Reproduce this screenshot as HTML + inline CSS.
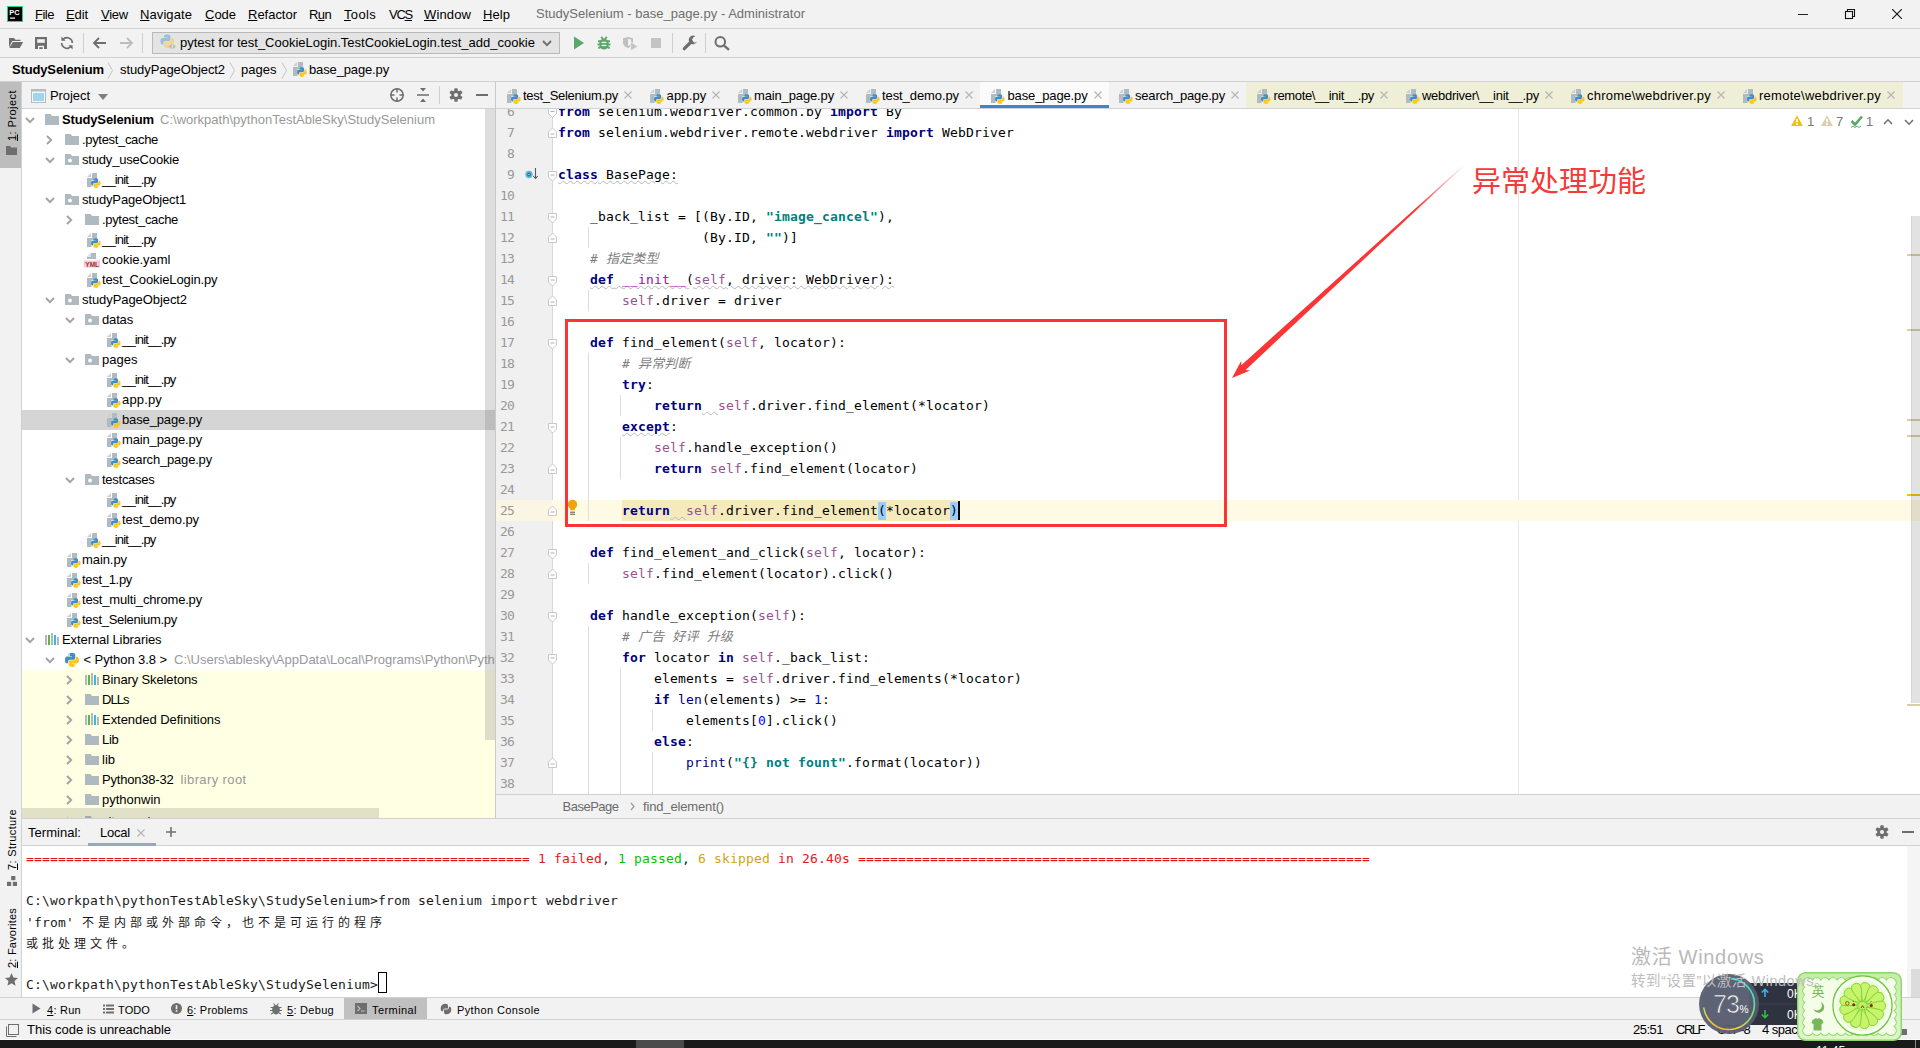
<!DOCTYPE html>
<html lang="zh"><head><meta charset="utf-8"><title>StudySelenium - base_page.py</title>
<style>
html,body{margin:0;padding:0}
body{width:1920px;height:1048px;overflow:hidden;position:relative;background:#f2f2f2;font-family:"Liberation Sans","Noto Sans CJK SC",sans-serif;font-size:13px;color:#000}
.b{position:absolute;display:block}
.t{position:absolute;white-space:pre;display:block}
.m{font-family:"DejaVu Sans Mono","Liberation Mono","Noto Sans CJK SC",monospace;font-size:13px;letter-spacing:0.1733px}
.cl{position:absolute;left:558px;white-space:pre;height:21px;line-height:21px}
.k{color:#000080;font-weight:bold}
.s{color:#008080;font-weight:bold}
.sf{color:#94558d}
.c{color:#808080;font-style:italic}
.n{color:#0000ff}
.bi{color:#000080}
.dm{color:#b200b2}
.ln{position:absolute;left:496px;width:18px;text-align:right;color:#999;height:21px;line-height:21px;letter-spacing:-.8px}
.zh{font-family:"Noto Sans CJK SC",sans-serif;font-size:12px;letter-spacing:4px}
u{text-decoration:underline;text-underline-offset:1px}
</style></head>
<body>
<!-- menu bar -->
<div class="b" style="left:0px;top:28px;width:1920px;height:1px;background:#d1d1d1;"></div>
<svg class="b" style="left:7px;top:6px;" width="16" height="16" viewBox="0 0 16 16"><rect width="16" height="16" fill="#21d789"/><rect x="1" y="1" width="14" height="14" fill="#000"/><text x="2.3" y="8.6" font-family="Liberation Sans,sans-serif" font-size="7.5" font-weight="bold" fill="#fff">PC</text><rect x="3" y="11.5" width="5" height="1.2" fill="#fff"/></svg>
<span class="t" style="left:35px;top:4.5px;line-height:20px;height:20px;letter-spacing:-0.488px;"><u>F</u>ile</span>
<span class="t" style="left:66px;top:4.5px;line-height:20px;height:20px;letter-spacing:-0.102px;"><u>E</u>dit</span>
<span class="t" style="left:101px;top:4.5px;line-height:20px;height:20px;letter-spacing:-0.238px;"><u>V</u>iew</span>
<span class="t" style="left:140px;top:4.5px;line-height:20px;height:20px;letter-spacing:0.086px;"><u>N</u>avigate</span>
<span class="t" style="left:205px;top:4.5px;line-height:20px;height:20px;letter-spacing:-0.020px;"><u>C</u>ode</span>
<span class="t" style="left:248px;top:4.5px;line-height:20px;height:20px;letter-spacing:-0.018px;"><u>R</u>efactor</span>
<span class="t" style="left:309px;top:4.5px;line-height:20px;height:20px;letter-spacing:-0.620px;">R<u>u</u>n</span>
<span class="t" style="left:344px;top:4.5px;line-height:20px;height:20px;letter-spacing:0.328px;"><u>T</u>ools</span>
<span class="t" style="left:389px;top:4.5px;line-height:20px;height:20px;letter-spacing:-1.245px;">VC<u>S</u></span>
<span class="t" style="left:424px;top:4.5px;line-height:20px;height:20px;letter-spacing:0.125px;"><u>W</u>indow</span>
<span class="t" style="left:483px;top:4.5px;line-height:20px;height:20px;letter-spacing:0.062px;"><u>H</u>elp</span>
<span class="t" style="left:536px;top:4px;line-height:20px;height:20px;color:#6e6e6e;letter-spacing:0.021px;">StudySelenium - base_page.py - Administrator</span>
<div class="b" style="left:1798px;top:14px;width:10px;height:1px;background:#222;"></div>
<svg class="b" style="left:1844px;top:8px;" width="12" height="12" viewBox="0 0 12 12"><path d="M3.5 3.5V1.5h7v7h-2" fill="none" stroke="#111" stroke-width="1.1"/><rect x="1.5" y="3.5" width="7" height="7" fill="none" stroke="#111" stroke-width="1.1"/></svg>
<svg class="b" style="left:1892px;top:9px;" width="10" height="10" viewBox="0 0 10 10"><path d="M0 0l10 10M10 0L0 10" stroke="#111" stroke-width="1.1" fill="none"/></svg>
<!-- toolbar -->
<div class="b" style="left:0px;top:57px;width:1920px;height:1px;background:#d1d1d1;"></div>
<svg class="b" style="left:8px;top:37px;" width="16" height="12" viewBox="0 0 16 12"><path d="M1 1h5l1.5 1.8H12.5V4H4.2L1 10.5z" fill="#6e6e6e"/><path d="M4.8 5H15.2l-3.4 6H1.4z" fill="#6e6e6e"/></svg>
<svg class="b" style="left:35px;top:37px;" width="12" height="12" viewBox="0 0 12 12"><path d="M0 0h12v12H0z" fill="#6e6e6e"/><rect x="2.2" y="2.2" width="7.6" height="3.6" fill="#f2f2f2"/><rect x="3" y="8.8" width="6" height="3.2" fill="#f2f2f2"/><rect x="4.3" y="10.2" width="3.4" height="1.8" fill="#6e6e6e"/></svg>
<svg class="b" style="left:60px;top:36px;" width="14" height="14" viewBox="0 0 14 14"><g transform="translate(14 0) scale(-1 1)"><path d="M12.3 7a5.3 5.3 0 0 1-9.4 3.3M1.7 7a5.3 5.3 0 0 1 9.4-3.3" fill="none" stroke="#6e6e6e" stroke-width="1.7"/><path d="M12.6 .6v4.2H8.4zM1.4 13.4V9.2h4.2z" fill="#6e6e6e"/></g></svg>
<div class="b" style="left:83px;top:33px;width:1px;height:20px;background:#cfcfcf;"></div>
<svg class="b" style="left:92px;top:36px;" width="15" height="14" viewBox="0 0 15 14"><path d="M14 7H2.5M7 2L2 7l5 5" fill="none" stroke="#6e6e6e" stroke-width="1.8"/></svg>
<svg class="b" style="left:119px;top:36px;" width="15" height="14" viewBox="0 0 15 14"><path d="M1 7h11.5M8 2l5 5-5 5" fill="none" stroke="#bdbdbd" stroke-width="1.8"/></svg>
<div class="b" style="left:142px;top:33px;width:1px;height:20px;background:#cfcfcf;"></div>
<div class="b" style="left:152px;top:32px;width:408px;height:22px;background:#e4e4e4;border:1px solid #b9b9b9;box-sizing:border-box;"></div>
<svg class="b" style="left:160px;top:34px;" width="16" height="16" viewBox="0 0 16 16"><g opacity=".42"><g transform="translate(0.5 0.5) scale(1.35)"><path d="M4.9 0C2.4 0 2.6 1.1 2.6 1.1v1.1h2.4v.35H1.6S0 2.4 0 4.95c0 2.55 1.4 2.45 1.4 2.45h.85V6.2s-.05-1.4 1.4-1.4h2.4s1.3.02 1.3-1.3V1.35S7.55 0 4.9 0z" fill="#3f8fc7"/><path d="M5.1 10c2.5 0 2.3-1.1 2.3-1.1V7.8H5v-.35h3.4S10 7.6 10 5.05C10 2.5 8.6 2.6 8.6 2.6h-.85v1.2s.05 1.4-1.4 1.4h-2.4s-1.3-.02-1.3 1.3v2.15S2.45 10 5.1 10z" fill="#fcc624"/></g><path d="M8.5 12.5l3.2-2.7v5.4z" fill="#e05555"/><path d="M16 12.5l-3.2-2.7v5.4z" fill="#59a869"/></g></svg>
<span class="t" style="left:180px;top:32.5px;line-height:20px;height:20px;letter-spacing:-0.010px;">pytest for test_CookieLogin.TestCookieLogin.test_add_cookie</span>
<svg class="b" style="left:542px;top:40px;" width="10" height="7" viewBox="0 0 10 7"><path d="M1 1l4 4.2L9 1" fill="none" stroke="#6e6e6e" stroke-width="1.9"/></svg>
<svg class="b" style="left:573px;top:36px;" width="12" height="14" viewBox="0 0 12 14"><path d="M1 .5l10 6.5-10 6.5z" fill="#59a869"/></svg>
<svg class="b" style="left:597px;top:36px;" width="14" height="14" viewBox="0 0 14 14"><ellipse cx="7" cy="8" rx="4.6" ry="5.6" fill="#59a869"/><path d="M4.2 .8l1.8 2.2M9.8 .8L8 3M1 5.2h12M.6 8.5h12.8M1.2 12l3-1M12.8 12l-3-1" stroke="#59a869" stroke-width="1.9" fill="none"/><rect x="4.6" y="5.8" width="4.8" height="1.3" fill="#f2f2f2"/><rect x="4.6" y="8.8" width="4.8" height="1.3" fill="#f2f2f2"/></svg>
<svg class="b" style="left:622px;top:36px;" width="17" height="16" viewBox="0 0 17 16"><path d="M1 2.2L6 1l5 1.2V6.5c0 3-3 5-5 5.5C4 11.5 1 9.5 1 6.5z" fill="#c0c0c0"/><path d="M6 3v7c1.6-.7 3-2 3-3.8V3.6z" fill="#f2f2f2"/><path d="M8.7 5.8l7.3 4.6-7.3 4.6z" fill="#c4c4c4" stroke="#f2f2f2" stroke-width=".8"/></svg>
<div class="b" style="left:651px;top:38px;width:10px;height:10px;background:#c4c4c4;"></div>
<div class="b" style="left:672px;top:33px;width:1px;height:20px;background:#cfcfcf;"></div>
<svg class="b" style="left:682px;top:35px;" width="16" height="16" viewBox="0 0 16 16"><path d="M2.3 13.7L9.5 6.5" stroke="#6e6e6e" stroke-width="3.2" stroke-linecap="round" fill="none"/><path d="M13.3 1.2a4.3 4.3 0 1 0 1.6 5.6l-2.6 1-2.4-2.4 1-2.6z" fill="#6e6e6e"/></svg>
<div class="b" style="left:705px;top:33px;width:1px;height:20px;background:#cfcfcf;"></div>
<svg class="b" style="left:714px;top:35px;" width="17" height="16" viewBox="0 0 17 16"><circle cx="6.3" cy="6.8" r="4.8" fill="none" stroke="#6e6e6e" stroke-width="2"/><path d="M9.8 10.3l5.2 4.6" stroke="#6e6e6e" stroke-width="2.3" fill="none"/></svg>
<!-- navigation bar -->
<div class="b" style="left:0px;top:81px;width:1920px;height:1px;background:#d1d1d1;"></div>
<span class="t" style="left:12px;top:60px;line-height:20px;height:20px;font-weight:bold;letter-spacing:-0.148px;">StudySelenium</span>
<svg class="b" style="left:107px;top:62px;" width="7" height="17" viewBox="0 0 7 17"><path d="M1 .5l4.5 8L1 16.5" fill="none" stroke="#c3c3c3" stroke-width="1"/></svg>
<span class="t" style="left:120px;top:60px;line-height:20px;height:20px;letter-spacing:-0.077px;">studyPageObject2</span>
<svg class="b" style="left:228.5px;top:62px;" width="7" height="17" viewBox="0 0 7 17"><path d="M1 .5l4.5 8L1 16.5" fill="none" stroke="#c3c3c3" stroke-width="1"/></svg>
<span class="t" style="left:241px;top:60px;line-height:20px;height:20px;letter-spacing:0.016px;">pages</span>
<svg class="b" style="left:280.5px;top:62px;" width="7" height="17" viewBox="0 0 7 17"><path d="M1 .5l4.5 8L1 16.5" fill="none" stroke="#c3c3c3" stroke-width="1"/></svg>
<svg class="b" style="left:292px;top:61px;" width="16" height="16" viewBox="0 0 16 16"><path d="M6 1h5v7H5.5v7H1V6h5z" fill="#b0bac1"/><path d="M1 5l4-4v4z" fill="#c9d0d5"/><g transform="translate(5 6.3) scale(0.96)"><path d="M4.9 0C2.4 0 2.6 1.1 2.6 1.1v1.1h2.4v.35H1.6S0 2.4 0 4.95c0 2.55 1.4 2.45 1.4 2.45h.85V6.2s-.05-1.4 1.4-1.4h2.4s1.3.02 1.3-1.3V1.35S7.55 0 4.9 0z" fill="#3f8fc7"/><path d="M5.1 10c2.5 0 2.3-1.1 2.3-1.1V7.8H5v-.35h3.4S10 7.6 10 5.05C10 2.5 8.6 2.6 8.6 2.6h-.85v1.2s.05 1.4-1.4 1.4h-2.4s-1.3-.02-1.3 1.3v2.15S2.45 10 5.1 10z" fill="#fcc624"/></g></svg>
<span class="t" style="left:309px;top:60px;line-height:20px;height:20px;letter-spacing:-0.141px;">base_page.py</span>
<!-- left strip -->
<div class="b" style="left:21px;top:82px;width:1px;height:916px;background:#d1d1d1;"></div>
<div class="b" style="left:0px;top:82px;width:21px;height:86px;background:#bdbdbd;"></div>
<span class="t" style="left:11.5px;top:141px;height:20px;line-height:20px;font-size:11px;letter-spacing:0.453px;transform-origin:0 0;transform:rotate(-90deg) translate(0,-10px)"><u>1</u>: Project</span>
<svg class="b" style="left:6px;top:146px;" width="11" height="9" viewBox="0 0 11 9"><path d="M0 0h4l1.3 1.5H11V9H0z" fill="#6e6e6e"/></svg>
<span class="t" style="left:11.5px;top:870px;height:20px;line-height:20px;font-size:11px;letter-spacing:0.345px;transform-origin:0 0;transform:rotate(-90deg) translate(0,-10px)"><u>7</u>: Structure</span>
<svg class="b" style="left:7px;top:876px;" width="10" height="10" viewBox="0 0 12 12"><rect x="5" y="0" width="5" height="5" fill="#6e6e6e"/><rect x="0" y="7" width="5" height="5" fill="#6e6e6e"/><rect x="7" y="7" width="5" height="5" fill="#6e6e6e"/></svg>
<span class="t" style="left:11.5px;top:968px;height:20px;line-height:20px;font-size:11px;letter-spacing:0.211px;transform-origin:0 0;transform:rotate(-90deg) translate(0,-10px)"><u>2</u>: Favorites</span>
<svg class="b" style="left:5px;top:973px;" width="13" height="13" viewBox="0 0 13 13"><path d="M6.5 0l1.9 4.5 4.6.4-3.5 3.1 1.1 4.7-4.1-2.5-4.1 2.5 1.1-4.7L0 4.9l4.6-.4z" fill="#6e6e6e"/></svg>
<!-- project tool window -->
<div class="b" style="left:22px;top:108px;width:474px;height:1px;background:#d1d1d1;"></div>
<div class="b" style="left:22px;top:109px;width:473px;height:709px;background:#fff;"></div>
<div class="b" style="left:495px;top:82px;width:1px;height:736px;background:#c9c9c9;"></div>
<svg class="b" style="left:31px;top:89px;" width="15" height="14" viewBox="0 0 15 14"><rect x=".5" y=".5" width="14" height="13" fill="#f7f7f7" stroke="#b4bcc2"/><rect x="0" y="0" width="15" height="2.5" fill="#b4bcc2"/><rect x="2" y="4" width="11" height="8" fill="#9fd6ee"/></svg>
<span class="t" style="left:50px;top:86px;line-height:20px;height:20px;letter-spacing:-0.067px;">Project</span>
<svg class="b" style="left:98px;top:93.5px;" width="10" height="6" viewBox="0 0 10 6"><path d="M0 0h10L5 6z" fill="#7f7f7f"/></svg>
<svg class="b" style="left:389px;top:87px;" width="16" height="16" viewBox="0 0 16 16"><circle cx="8" cy="8" r="6.2" fill="none" stroke="#6e6e6e" stroke-width="1.5"/><path d="M8 1v4.5M8 10.5V15M1 8h4.5M10.5 8H15" stroke="#6e6e6e" stroke-width="1.5"/></svg>
<svg class="b" style="left:417px;top:88px;" width="12" height="14" viewBox="0 0 12 14"><path d="M0 6.3h12v1.4H0zM3 0h6L6 3.5zM3 14h6L6 10.5z" fill="#6e6e6e"/></svg>
<div class="b" style="left:439px;top:86px;width:1px;height:18px;background:#cfcfcf;"></div>
<svg class="b" style="left:449px;top:88px;" width="14" height="14" viewBox="0 0 14 14"><g fill="#6e6e6e"><circle cx="7" cy="7" r="4.7"/><rect x="5.3" y=".3" width="3.4" height="13.4" rx=".8"/><rect x="5.3" y=".3" width="3.4" height="13.4" rx=".8" transform="rotate(60 7 7)"/><rect x="5.3" y=".3" width="3.4" height="13.4" rx=".8" transform="rotate(120 7 7)"/></g><circle cx="7" cy="7" r="2" fill="#f2f2f2"/></svg>
<div class="b" style="left:476px;top:94px;width:12px;height:2px;background:#6e6e6e;"></div>
<div class="b" style="left:22px;top:670px;width:473px;height:148px;background:#ffffe4;"></div>
<div class="b" style="left:22px;top:410px;width:473px;height:20px;background:#d5d5d5;"></div>
<div class="b" style="left:22px;top:109px;width:473px;height:709px;overflow:hidden">
<svg class="b" style="left:3px;top:8px;" width="10" height="7" viewBox="0 0 10 7"><path d="M1 1l4 4.2L9 1" fill="none" stroke="#a2a2a2" stroke-width="1.9"/></svg>
<svg class="b" style="left:22px;top:3px;" width="16" height="16" viewBox="0 0 16 16"><path d="M1 2h5.5l1.6 2H15v9H1z" fill="#aeb9c0"/></svg>
<span class="t" style="left:40px;top:1px;line-height:20px;height:20px;font-weight:bold;letter-spacing:-0.148px;">StudySelenium</span>
<span class="t" style="left:138px;top:1px;line-height:20px;height:20px;color:#999;letter-spacing:0.009px;">C:\workpath\pythonTestAbleSky\StudySelenium</span>
<svg class="b" style="left:24px;top:26px;" width="7" height="10" viewBox="0 0 7 10"><path d="M1 1l4.2 4L1 9" fill="none" stroke="#a2a2a2" stroke-width="1.9"/></svg>
<svg class="b" style="left:42px;top:23px;" width="16" height="16" viewBox="0 0 16 16"><path d="M1 2h5.5l1.6 2H15v9H1z" fill="#aeb9c0"/></svg>
<span class="t" style="left:60px;top:21px;line-height:20px;height:20px;letter-spacing:-0.325px;">.pytest_cache</span>
<svg class="b" style="left:23px;top:48px;" width="10" height="7" viewBox="0 0 10 7"><path d="M1 1l4 4.2L9 1" fill="none" stroke="#a2a2a2" stroke-width="1.9"/></svg>
<svg class="b" style="left:42px;top:43px;" width="16" height="16" viewBox="0 0 16 16"><path d="M1 2h5.5l1.6 2H15v9H1z" fill="#aeb9c0"/><circle cx="6" cy="8.5" r="1.9" fill="#fff"/></svg>
<span class="t" style="left:60px;top:41px;line-height:20px;height:20px;letter-spacing:-0.182px;">study_useCookie</span>
<svg class="b" style="left:64px;top:63px;" width="16" height="16" viewBox="0 0 16 16"><path d="M6 1h5v7H5.5v7H1V6h5z" fill="#b0bac1"/><path d="M1 5l4-4v4z" fill="#c9d0d5"/><g transform="translate(5 6.3) scale(0.96)"><path d="M4.9 0C2.4 0 2.6 1.1 2.6 1.1v1.1h2.4v.35H1.6S0 2.4 0 4.95c0 2.55 1.4 2.45 1.4 2.45h.85V6.2s-.05-1.4 1.4-1.4h2.4s1.3.02 1.3-1.3V1.35S7.55 0 4.9 0z" fill="#3f8fc7"/><path d="M5.1 10c2.5 0 2.3-1.1 2.3-1.1V7.8H5v-.35h3.4S10 7.6 10 5.05C10 2.5 8.6 2.6 8.6 2.6h-.85v1.2s.05 1.4-1.4 1.4h-2.4s-1.3-.02-1.3 1.3v2.15S2.45 10 5.1 10z" fill="#fcc624"/></g></svg>
<span class="t" style="left:80px;top:61px;line-height:20px;height:20px;letter-spacing:-0.854px;">__init__.py</span>
<svg class="b" style="left:23px;top:88px;" width="10" height="7" viewBox="0 0 10 7"><path d="M1 1l4 4.2L9 1" fill="none" stroke="#a2a2a2" stroke-width="1.9"/></svg>
<svg class="b" style="left:42px;top:83px;" width="16" height="16" viewBox="0 0 16 16"><path d="M1 2h5.5l1.6 2H15v9H1z" fill="#aeb9c0"/><circle cx="6" cy="8.5" r="1.9" fill="#fff"/></svg>
<span class="t" style="left:60px;top:81px;line-height:20px;height:20px;letter-spacing:-0.140px;">studyPageObject1</span>
<svg class="b" style="left:44px;top:106px;" width="7" height="10" viewBox="0 0 7 10"><path d="M1 1l4.2 4L1 9" fill="none" stroke="#a2a2a2" stroke-width="1.9"/></svg>
<svg class="b" style="left:62px;top:103px;" width="16" height="16" viewBox="0 0 16 16"><path d="M1 2h5.5l1.6 2H15v9H1z" fill="#aeb9c0"/></svg>
<span class="t" style="left:80px;top:101px;line-height:20px;height:20px;letter-spacing:-0.325px;">.pytest_cache</span>
<svg class="b" style="left:64px;top:123px;" width="16" height="16" viewBox="0 0 16 16"><path d="M6 1h5v7H5.5v7H1V6h5z" fill="#b0bac1"/><path d="M1 5l4-4v4z" fill="#c9d0d5"/><g transform="translate(5 6.3) scale(0.96)"><path d="M4.9 0C2.4 0 2.6 1.1 2.6 1.1v1.1h2.4v.35H1.6S0 2.4 0 4.95c0 2.55 1.4 2.45 1.4 2.45h.85V6.2s-.05-1.4 1.4-1.4h2.4s1.3.02 1.3-1.3V1.35S7.55 0 4.9 0z" fill="#3f8fc7"/><path d="M5.1 10c2.5 0 2.3-1.1 2.3-1.1V7.8H5v-.35h3.4S10 7.6 10 5.05C10 2.5 8.6 2.6 8.6 2.6h-.85v1.2s.05 1.4-1.4 1.4h-2.4s-1.3-.02-1.3 1.3v2.15S2.45 10 5.1 10z" fill="#fcc624"/></g></svg>
<span class="t" style="left:80px;top:121px;line-height:20px;height:20px;letter-spacing:-0.854px;">__init__.py</span>
<svg class="b" style="left:62px;top:143px;" width="16" height="16" viewBox="0 0 16 16"><path d="M7 1h5v6H3V5z" fill="#b0bac1"/><path d="M3 5l4-4v4z" fill="#dfe3e6"/><rect x="0" y="8.5" width="16" height="7" fill="#f9c9cf"/><text x="8.2" y="14.7" text-anchor="middle" font-family="Liberation Sans,sans-serif" font-size="6.5" font-weight="bold" fill="#9c3545">YML</text></svg>
<span class="t" style="left:80px;top:141px;line-height:20px;height:20px;letter-spacing:-0.013px;">cookie.yaml</span>
<svg class="b" style="left:64px;top:163px;" width="16" height="16" viewBox="0 0 16 16"><path d="M6 1h5v7H5.5v7H1V6h5z" fill="#b0bac1"/><path d="M1 5l4-4v4z" fill="#c9d0d5"/><g transform="translate(5 6.3) scale(0.96)"><path d="M4.9 0C2.4 0 2.6 1.1 2.6 1.1v1.1h2.4v.35H1.6S0 2.4 0 4.95c0 2.55 1.4 2.45 1.4 2.45h.85V6.2s-.05-1.4 1.4-1.4h2.4s1.3.02 1.3-1.3V1.35S7.55 0 4.9 0z" fill="#3f8fc7"/><path d="M5.1 10c2.5 0 2.3-1.1 2.3-1.1V7.8H5v-.35h3.4S10 7.6 10 5.05C10 2.5 8.6 2.6 8.6 2.6h-.85v1.2s.05 1.4-1.4 1.4h-2.4s-1.3-.02-1.3 1.3v2.15S2.45 10 5.1 10z" fill="#fcc624"/></g></svg>
<span class="t" style="left:80px;top:161px;line-height:20px;height:20px;letter-spacing:-0.122px;">test_CookieLogin.py</span>
<svg class="b" style="left:23px;top:188px;" width="10" height="7" viewBox="0 0 10 7"><path d="M1 1l4 4.2L9 1" fill="none" stroke="#a2a2a2" stroke-width="1.9"/></svg>
<svg class="b" style="left:42px;top:183px;" width="16" height="16" viewBox="0 0 16 16"><path d="M1 2h5.5l1.6 2H15v9H1z" fill="#aeb9c0"/><circle cx="6" cy="8.5" r="1.9" fill="#fff"/></svg>
<span class="t" style="left:60px;top:181px;line-height:20px;height:20px;letter-spacing:-0.077px;">studyPageObject2</span>
<svg class="b" style="left:43px;top:208px;" width="10" height="7" viewBox="0 0 10 7"><path d="M1 1l4 4.2L9 1" fill="none" stroke="#a2a2a2" stroke-width="1.9"/></svg>
<svg class="b" style="left:62px;top:203px;" width="16" height="16" viewBox="0 0 16 16"><path d="M1 2h5.5l1.6 2H15v9H1z" fill="#aeb9c0"/><circle cx="6" cy="8.5" r="1.9" fill="#fff"/></svg>
<span class="t" style="left:80px;top:201px;line-height:20px;height:20px;letter-spacing:-0.163px;">datas</span>
<svg class="b" style="left:84px;top:223px;" width="16" height="16" viewBox="0 0 16 16"><path d="M6 1h5v7H5.5v7H1V6h5z" fill="#b0bac1"/><path d="M1 5l4-4v4z" fill="#c9d0d5"/><g transform="translate(5 6.3) scale(0.96)"><path d="M4.9 0C2.4 0 2.6 1.1 2.6 1.1v1.1h2.4v.35H1.6S0 2.4 0 4.95c0 2.55 1.4 2.45 1.4 2.45h.85V6.2s-.05-1.4 1.4-1.4h2.4s1.3.02 1.3-1.3V1.35S7.55 0 4.9 0z" fill="#3f8fc7"/><path d="M5.1 10c2.5 0 2.3-1.1 2.3-1.1V7.8H5v-.35h3.4S10 7.6 10 5.05C10 2.5 8.6 2.6 8.6 2.6h-.85v1.2s.05 1.4-1.4 1.4h-2.4s-1.3-.02-1.3 1.3v2.15S2.45 10 5.1 10z" fill="#fcc624"/></g></svg>
<span class="t" style="left:100px;top:221px;line-height:20px;height:20px;letter-spacing:-0.854px;">__init__.py</span>
<svg class="b" style="left:43px;top:248px;" width="10" height="7" viewBox="0 0 10 7"><path d="M1 1l4 4.2L9 1" fill="none" stroke="#a2a2a2" stroke-width="1.9"/></svg>
<svg class="b" style="left:62px;top:243px;" width="16" height="16" viewBox="0 0 16 16"><path d="M1 2h5.5l1.6 2H15v9H1z" fill="#aeb9c0"/><circle cx="6" cy="8.5" r="1.9" fill="#fff"/></svg>
<span class="t" style="left:80px;top:241px;line-height:20px;height:20px;letter-spacing:0.016px;">pages</span>
<svg class="b" style="left:84px;top:263px;" width="16" height="16" viewBox="0 0 16 16"><path d="M6 1h5v7H5.5v7H1V6h5z" fill="#b0bac1"/><path d="M1 5l4-4v4z" fill="#c9d0d5"/><g transform="translate(5 6.3) scale(0.96)"><path d="M4.9 0C2.4 0 2.6 1.1 2.6 1.1v1.1h2.4v.35H1.6S0 2.4 0 4.95c0 2.55 1.4 2.45 1.4 2.45h.85V6.2s-.05-1.4 1.4-1.4h2.4s1.3.02 1.3-1.3V1.35S7.55 0 4.9 0z" fill="#3f8fc7"/><path d="M5.1 10c2.5 0 2.3-1.1 2.3-1.1V7.8H5v-.35h3.4S10 7.6 10 5.05C10 2.5 8.6 2.6 8.6 2.6h-.85v1.2s.05 1.4-1.4 1.4h-2.4s-1.3-.02-1.3 1.3v2.15S2.45 10 5.1 10z" fill="#fcc624"/></g></svg>
<span class="t" style="left:100px;top:261px;line-height:20px;height:20px;letter-spacing:-0.854px;">__init__.py</span>
<svg class="b" style="left:84px;top:283px;" width="16" height="16" viewBox="0 0 16 16"><path d="M6 1h5v7H5.5v7H1V6h5z" fill="#b0bac1"/><path d="M1 5l4-4v4z" fill="#c9d0d5"/><g transform="translate(5 6.3) scale(0.96)"><path d="M4.9 0C2.4 0 2.6 1.1 2.6 1.1v1.1h2.4v.35H1.6S0 2.4 0 4.95c0 2.55 1.4 2.45 1.4 2.45h.85V6.2s-.05-1.4 1.4-1.4h2.4s1.3.02 1.3-1.3V1.35S7.55 0 4.9 0z" fill="#3f8fc7"/><path d="M5.1 10c2.5 0 2.3-1.1 2.3-1.1V7.8H5v-.35h3.4S10 7.6 10 5.05C10 2.5 8.6 2.6 8.6 2.6h-.85v1.2s.05 1.4-1.4 1.4h-2.4s-1.3-.02-1.3 1.3v2.15S2.45 10 5.1 10z" fill="#fcc624"/></g></svg>
<span class="t" style="left:100px;top:281px;line-height:20px;height:20px;letter-spacing:0.159px;">app.py</span>
<svg class="b" style="left:84px;top:303px;" width="16" height="16" viewBox="0 0 16 16"><path d="M6 1h5v7H5.5v7H1V6h5z" fill="#b0bac1"/><path d="M1 5l4-4v4z" fill="#c9d0d5"/><g transform="translate(5 6.3) scale(0.96)"><path d="M4.9 0C2.4 0 2.6 1.1 2.6 1.1v1.1h2.4v.35H1.6S0 2.4 0 4.95c0 2.55 1.4 2.45 1.4 2.45h.85V6.2s-.05-1.4 1.4-1.4h2.4s1.3.02 1.3-1.3V1.35S7.55 0 4.9 0z" fill="#3f8fc7"/><path d="M5.1 10c2.5 0 2.3-1.1 2.3-1.1V7.8H5v-.35h3.4S10 7.6 10 5.05C10 2.5 8.6 2.6 8.6 2.6h-.85v1.2s.05 1.4-1.4 1.4h-2.4s-1.3-.02-1.3 1.3v2.15S2.45 10 5.1 10z" fill="#fcc624"/></g></svg>
<span class="t" style="left:100px;top:301px;line-height:20px;height:20px;letter-spacing:-0.141px;">base_page.py</span>
<svg class="b" style="left:84px;top:323px;" width="16" height="16" viewBox="0 0 16 16"><path d="M6 1h5v7H5.5v7H1V6h5z" fill="#b0bac1"/><path d="M1 5l4-4v4z" fill="#c9d0d5"/><g transform="translate(5 6.3) scale(0.96)"><path d="M4.9 0C2.4 0 2.6 1.1 2.6 1.1v1.1h2.4v.35H1.6S0 2.4 0 4.95c0 2.55 1.4 2.45 1.4 2.45h.85V6.2s-.05-1.4 1.4-1.4h2.4s1.3.02 1.3-1.3V1.35S7.55 0 4.9 0z" fill="#3f8fc7"/><path d="M5.1 10c2.5 0 2.3-1.1 2.3-1.1V7.8H5v-.35h3.4S10 7.6 10 5.05C10 2.5 8.6 2.6 8.6 2.6h-.85v1.2s.05 1.4-1.4 1.4h-2.4s-1.3-.02-1.3 1.3v2.15S2.45 10 5.1 10z" fill="#fcc624"/></g></svg>
<span class="t" style="left:100px;top:321px;line-height:20px;height:20px;letter-spacing:-0.139px;">main_page.py</span>
<svg class="b" style="left:84px;top:343px;" width="16" height="16" viewBox="0 0 16 16"><path d="M6 1h5v7H5.5v7H1V6h5z" fill="#b0bac1"/><path d="M1 5l4-4v4z" fill="#c9d0d5"/><g transform="translate(5 6.3) scale(0.96)"><path d="M4.9 0C2.4 0 2.6 1.1 2.6 1.1v1.1h2.4v.35H1.6S0 2.4 0 4.95c0 2.55 1.4 2.45 1.4 2.45h.85V6.2s-.05-1.4 1.4-1.4h2.4s1.3.02 1.3-1.3V1.35S7.55 0 4.9 0z" fill="#3f8fc7"/><path d="M5.1 10c2.5 0 2.3-1.1 2.3-1.1V7.8H5v-.35h3.4S10 7.6 10 5.05C10 2.5 8.6 2.6 8.6 2.6h-.85v1.2s.05 1.4-1.4 1.4h-2.4s-1.3-.02-1.3 1.3v2.15S2.45 10 5.1 10z" fill="#fcc624"/></g></svg>
<span class="t" style="left:100px;top:341px;line-height:20px;height:20px;letter-spacing:-0.180px;">search_page.py</span>
<svg class="b" style="left:43px;top:368px;" width="10" height="7" viewBox="0 0 10 7"><path d="M1 1l4 4.2L9 1" fill="none" stroke="#a2a2a2" stroke-width="1.9"/></svg>
<svg class="b" style="left:62px;top:363px;" width="16" height="16" viewBox="0 0 16 16"><path d="M1 2h5.5l1.6 2H15v9H1z" fill="#aeb9c0"/><circle cx="6" cy="8.5" r="1.9" fill="#fff"/></svg>
<span class="t" style="left:80px;top:361px;line-height:20px;height:20px;letter-spacing:-0.269px;">testcases</span>
<svg class="b" style="left:84px;top:383px;" width="16" height="16" viewBox="0 0 16 16"><path d="M6 1h5v7H5.5v7H1V6h5z" fill="#b0bac1"/><path d="M1 5l4-4v4z" fill="#c9d0d5"/><g transform="translate(5 6.3) scale(0.96)"><path d="M4.9 0C2.4 0 2.6 1.1 2.6 1.1v1.1h2.4v.35H1.6S0 2.4 0 4.95c0 2.55 1.4 2.45 1.4 2.45h.85V6.2s-.05-1.4 1.4-1.4h2.4s1.3.02 1.3-1.3V1.35S7.55 0 4.9 0z" fill="#3f8fc7"/><path d="M5.1 10c2.5 0 2.3-1.1 2.3-1.1V7.8H5v-.35h3.4S10 7.6 10 5.05C10 2.5 8.6 2.6 8.6 2.6h-.85v1.2s.05 1.4-1.4 1.4h-2.4s-1.3-.02-1.3 1.3v2.15S2.45 10 5.1 10z" fill="#fcc624"/></g></svg>
<span class="t" style="left:100px;top:381px;line-height:20px;height:20px;letter-spacing:-0.854px;">__init__.py</span>
<svg class="b" style="left:84px;top:403px;" width="16" height="16" viewBox="0 0 16 16"><path d="M6 1h5v7H5.5v7H1V6h5z" fill="#b0bac1"/><path d="M1 5l4-4v4z" fill="#c9d0d5"/><g transform="translate(5 6.3) scale(0.96)"><path d="M4.9 0C2.4 0 2.6 1.1 2.6 1.1v1.1h2.4v.35H1.6S0 2.4 0 4.95c0 2.55 1.4 2.45 1.4 2.45h.85V6.2s-.05-1.4 1.4-1.4h2.4s1.3.02 1.3-1.3V1.35S7.55 0 4.9 0z" fill="#3f8fc7"/><path d="M5.1 10c2.5 0 2.3-1.1 2.3-1.1V7.8H5v-.35h3.4S10 7.6 10 5.05C10 2.5 8.6 2.6 8.6 2.6h-.85v1.2s.05 1.4-1.4 1.4h-2.4s-1.3-.02-1.3 1.3v2.15S2.45 10 5.1 10z" fill="#fcc624"/></g></svg>
<span class="t" style="left:100px;top:401px;line-height:20px;height:20px;letter-spacing:-0.087px;">test_demo.py</span>
<svg class="b" style="left:64px;top:423px;" width="16" height="16" viewBox="0 0 16 16"><path d="M6 1h5v7H5.5v7H1V6h5z" fill="#b0bac1"/><path d="M1 5l4-4v4z" fill="#c9d0d5"/><g transform="translate(5 6.3) scale(0.96)"><path d="M4.9 0C2.4 0 2.6 1.1 2.6 1.1v1.1h2.4v.35H1.6S0 2.4 0 4.95c0 2.55 1.4 2.45 1.4 2.45h.85V6.2s-.05-1.4 1.4-1.4h2.4s1.3.02 1.3-1.3V1.35S7.55 0 4.9 0z" fill="#3f8fc7"/><path d="M5.1 10c2.5 0 2.3-1.1 2.3-1.1V7.8H5v-.35h3.4S10 7.6 10 5.05C10 2.5 8.6 2.6 8.6 2.6h-.85v1.2s.05 1.4-1.4 1.4h-2.4s-1.3-.02-1.3 1.3v2.15S2.45 10 5.1 10z" fill="#fcc624"/></g></svg>
<span class="t" style="left:80px;top:421px;line-height:20px;height:20px;letter-spacing:-0.854px;">__init__.py</span>
<svg class="b" style="left:44px;top:443px;" width="16" height="16" viewBox="0 0 16 16"><path d="M6 1h5v7H5.5v7H1V6h5z" fill="#b0bac1"/><path d="M1 5l4-4v4z" fill="#c9d0d5"/><g transform="translate(5 6.3) scale(0.96)"><path d="M4.9 0C2.4 0 2.6 1.1 2.6 1.1v1.1h2.4v.35H1.6S0 2.4 0 4.95c0 2.55 1.4 2.45 1.4 2.45h.85V6.2s-.05-1.4 1.4-1.4h2.4s1.3.02 1.3-1.3V1.35S7.55 0 4.9 0z" fill="#3f8fc7"/><path d="M5.1 10c2.5 0 2.3-1.1 2.3-1.1V7.8H5v-.35h3.4S10 7.6 10 5.05C10 2.5 8.6 2.6 8.6 2.6h-.85v1.2s.05 1.4-1.4 1.4h-2.4s-1.3-.02-1.3 1.3v2.15S2.45 10 5.1 10z" fill="#fcc624"/></g></svg>
<span class="t" style="left:60px;top:441px;line-height:20px;height:20px;letter-spacing:-0.076px;">main.py</span>
<svg class="b" style="left:44px;top:463px;" width="16" height="16" viewBox="0 0 16 16"><path d="M6 1h5v7H5.5v7H1V6h5z" fill="#b0bac1"/><path d="M1 5l4-4v4z" fill="#c9d0d5"/><g transform="translate(5 6.3) scale(0.96)"><path d="M4.9 0C2.4 0 2.6 1.1 2.6 1.1v1.1h2.4v.35H1.6S0 2.4 0 4.95c0 2.55 1.4 2.45 1.4 2.45h.85V6.2s-.05-1.4 1.4-1.4h2.4s1.3.02 1.3-1.3V1.35S7.55 0 4.9 0z" fill="#3f8fc7"/><path d="M5.1 10c2.5 0 2.3-1.1 2.3-1.1V7.8H5v-.35h3.4S10 7.6 10 5.05C10 2.5 8.6 2.6 8.6 2.6h-.85v1.2s.05 1.4-1.4 1.4h-2.4s-1.3-.02-1.3 1.3v2.15S2.45 10 5.1 10z" fill="#fcc624"/></g></svg>
<span class="t" style="left:60px;top:461px;line-height:20px;height:20px;letter-spacing:-0.307px;">test_1.py</span>
<svg class="b" style="left:44px;top:483px;" width="16" height="16" viewBox="0 0 16 16"><path d="M6 1h5v7H5.5v7H1V6h5z" fill="#b0bac1"/><path d="M1 5l4-4v4z" fill="#c9d0d5"/><g transform="translate(5 6.3) scale(0.96)"><path d="M4.9 0C2.4 0 2.6 1.1 2.6 1.1v1.1h2.4v.35H1.6S0 2.4 0 4.95c0 2.55 1.4 2.45 1.4 2.45h.85V6.2s-.05-1.4 1.4-1.4h2.4s1.3.02 1.3-1.3V1.35S7.55 0 4.9 0z" fill="#3f8fc7"/><path d="M5.1 10c2.5 0 2.3-1.1 2.3-1.1V7.8H5v-.35h3.4S10 7.6 10 5.05C10 2.5 8.6 2.6 8.6 2.6h-.85v1.2s.05 1.4-1.4 1.4h-2.4s-1.3-.02-1.3 1.3v2.15S2.45 10 5.1 10z" fill="#fcc624"/></g></svg>
<span class="t" style="left:60px;top:481px;line-height:20px;height:20px;letter-spacing:-0.178px;">test_multi_chrome.py</span>
<svg class="b" style="left:44px;top:503px;" width="16" height="16" viewBox="0 0 16 16"><path d="M6 1h5v7H5.5v7H1V6h5z" fill="#b0bac1"/><path d="M1 5l4-4v4z" fill="#c9d0d5"/><g transform="translate(5 6.3) scale(0.96)"><path d="M4.9 0C2.4 0 2.6 1.1 2.6 1.1v1.1h2.4v.35H1.6S0 2.4 0 4.95c0 2.55 1.4 2.45 1.4 2.45h.85V6.2s-.05-1.4 1.4-1.4h2.4s1.3.02 1.3-1.3V1.35S7.55 0 4.9 0z" fill="#3f8fc7"/><path d="M5.1 10c2.5 0 2.3-1.1 2.3-1.1V7.8H5v-.35h3.4S10 7.6 10 5.05C10 2.5 8.6 2.6 8.6 2.6h-.85v1.2s.05 1.4-1.4 1.4h-2.4s-1.3-.02-1.3 1.3v2.15S2.45 10 5.1 10z" fill="#fcc624"/></g></svg>
<span class="t" style="left:60px;top:501px;line-height:20px;height:20px;letter-spacing:-0.296px;">test_Selenium.py</span>
<svg class="b" style="left:3px;top:528px;" width="10" height="7" viewBox="0 0 10 7"><path d="M1 1l4 4.2L9 1" fill="none" stroke="#a2a2a2" stroke-width="1.9"/></svg>
<svg class="b" style="left:22px;top:522px;" width="16" height="16" viewBox="0 0 16 16"><rect x="1" y="4" width="2" height="10" fill="#aeb9c0"/><rect x="4" y="4" width="2" height="10" fill="#62b543"/><rect x="7" y="2" width="2" height="12" fill="#aeb9c0"/><rect x="10" y="4" width="2" height="10" fill="#40b6e0"/><rect x="13" y="6" width="2" height="8" fill="#aeb9c0"/></svg>
<span class="t" style="left:40px;top:521px;line-height:20px;height:20px;letter-spacing:-0.092px;">External Libraries</span>
<svg class="b" style="left:23px;top:548px;" width="10" height="7" viewBox="0 0 10 7"><path d="M1 1l4 4.2L9 1" fill="none" stroke="#a2a2a2" stroke-width="1.9"/></svg>
<svg class="b" style="left:42px;top:543px;" width="16" height="16" viewBox="0 0 16 16"><g transform="translate(1 1) scale(1.4)"><path d="M4.9 0C2.4 0 2.6 1.1 2.6 1.1v1.1h2.4v.35H1.6S0 2.4 0 4.95c0 2.55 1.4 2.45 1.4 2.45h.85V6.2s-.05-1.4 1.4-1.4h2.4s1.3.02 1.3-1.3V1.35S7.55 0 4.9 0z" fill="#3f8fc7"/><path d="M5.1 10c2.5 0 2.3-1.1 2.3-1.1V7.8H5v-.35h3.4S10 7.6 10 5.05C10 2.5 8.6 2.6 8.6 2.6h-.85v1.2s.05 1.4-1.4 1.4h-2.4s-1.3-.02-1.3 1.3v2.15S2.45 10 5.1 10z" fill="#fcc624"/></g><circle cx="5.4" cy="3.1" r=".75" fill="#fff"/><circle cx="10.6" cy="12.9" r=".75" fill="#fff"/></svg>
<span class="t" style="left:61.5px;top:541px;line-height:20px;height:20px;letter-spacing:-0.077px;">&lt; Python 3.8 &gt;</span>
<span class="t" style="left:152px;top:541px;line-height:20px;height:20px;color:#999;">C:\Users\ablesky\AppData\Local\Programs\Python\Python38-32\python.exe</span>
<svg class="b" style="left:44px;top:566px;" width="7" height="10" viewBox="0 0 7 10"><path d="M1 1l4.2 4L1 9" fill="none" stroke="#a2a2a2" stroke-width="1.9"/></svg>
<svg class="b" style="left:62px;top:562px;" width="16" height="16" viewBox="0 0 16 16"><rect x="1" y="4" width="2" height="10" fill="#aeb9c0"/><rect x="4" y="4" width="2" height="10" fill="#62b543"/><rect x="7" y="2" width="2" height="12" fill="#aeb9c0"/><rect x="10" y="4" width="2" height="10" fill="#40b6e0"/><rect x="13" y="6" width="2" height="8" fill="#aeb9c0"/></svg>
<span class="t" style="left:80px;top:561px;line-height:20px;height:20px;letter-spacing:-0.129px;">Binary Skeletons</span>
<svg class="b" style="left:44px;top:586px;" width="7" height="10" viewBox="0 0 7 10"><path d="M1 1l4.2 4L1 9" fill="none" stroke="#a2a2a2" stroke-width="1.9"/></svg>
<svg class="b" style="left:62px;top:583px;" width="16" height="16" viewBox="0 0 16 16"><path d="M1 2h5.5l1.6 2H15v9H1z" fill="#aeb9c0"/></svg>
<span class="t" style="left:80px;top:581px;line-height:20px;height:20px;letter-spacing:-0.965px;">DLLs</span>
<svg class="b" style="left:44px;top:606px;" width="7" height="10" viewBox="0 0 7 10"><path d="M1 1l4.2 4L1 9" fill="none" stroke="#a2a2a2" stroke-width="1.9"/></svg>
<svg class="b" style="left:62px;top:602px;" width="16" height="16" viewBox="0 0 16 16"><rect x="1" y="4" width="2" height="10" fill="#aeb9c0"/><rect x="4" y="4" width="2" height="10" fill="#62b543"/><rect x="7" y="2" width="2" height="12" fill="#aeb9c0"/><rect x="10" y="4" width="2" height="10" fill="#40b6e0"/><rect x="13" y="6" width="2" height="8" fill="#aeb9c0"/></svg>
<span class="t" style="left:80px;top:601px;line-height:20px;height:20px;letter-spacing:-0.037px;">Extended Definitions</span>
<svg class="b" style="left:44px;top:626px;" width="7" height="10" viewBox="0 0 7 10"><path d="M1 1l4.2 4L1 9" fill="none" stroke="#a2a2a2" stroke-width="1.9"/></svg>
<svg class="b" style="left:62px;top:623px;" width="16" height="16" viewBox="0 0 16 16"><path d="M1 2h5.5l1.6 2H15v9H1z" fill="#aeb9c0"/></svg>
<span class="t" style="left:80px;top:621px;line-height:20px;height:20px;letter-spacing:-0.286px;">Lib</span>
<svg class="b" style="left:44px;top:646px;" width="7" height="10" viewBox="0 0 7 10"><path d="M1 1l4.2 4L1 9" fill="none" stroke="#a2a2a2" stroke-width="1.9"/></svg>
<svg class="b" style="left:62px;top:643px;" width="16" height="16" viewBox="0 0 16 16"><path d="M1 2h5.5l1.6 2H15v9H1z" fill="#aeb9c0"/></svg>
<span class="t" style="left:80px;top:641px;line-height:20px;height:20px;letter-spacing:-0.005px;">lib</span>
<svg class="b" style="left:44px;top:666px;" width="7" height="10" viewBox="0 0 7 10"><path d="M1 1l4.2 4L1 9" fill="none" stroke="#a2a2a2" stroke-width="1.9"/></svg>
<svg class="b" style="left:62px;top:663px;" width="16" height="16" viewBox="0 0 16 16"><path d="M1 2h5.5l1.6 2H15v9H1z" fill="#aeb9c0"/></svg>
<span class="t" style="left:80px;top:661px;line-height:20px;height:20px;letter-spacing:-0.203px;">Python38-32</span>
<span class="t" style="left:158.5px;top:661px;line-height:20px;height:20px;color:#999;letter-spacing:0.382px;">library root</span>
<svg class="b" style="left:44px;top:686px;" width="7" height="10" viewBox="0 0 7 10"><path d="M1 1l4.2 4L1 9" fill="none" stroke="#a2a2a2" stroke-width="1.9"/></svg>
<svg class="b" style="left:62px;top:683px;" width="16" height="16" viewBox="0 0 16 16"><path d="M1 2h5.5l1.6 2H15v9H1z" fill="#aeb9c0"/></svg>
<span class="t" style="left:80px;top:681px;line-height:20px;height:20px;letter-spacing:-0.005px;">pythonwin</span>
<svg class="b" style="left:44px;top:708px;" width="7" height="10" viewBox="0 0 7 10"><path d="M1 1l4.2 4L1 9" fill="none" stroke="#a2a2a2" stroke-width="1.9"/></svg>
<svg class="b" style="left:62px;top:705px;" width="16" height="16" viewBox="0 0 16 16"><path d="M1 2h5.5l1.6 2H15v9H1z" fill="#aeb9c0"/></svg>
<span class="t" style="left:80px;top:703px;line-height:20px;height:20px;letter-spacing:-0.017px;">site-packages</span>
</div>
<div class="b" style="left:485px;top:109px;width:10px;height:631px;background:rgba(120,120,120,.25);"></div>
<div class="b" style="left:22px;top:808px;width:357px;height:10px;background:rgba(120,120,100,.22);"></div>
<div class="b" style="left:22px;top:818px;width:1898px;height:1px;background:#d1d1d1;"></div>
<!-- editor tabs -->
<div class="b" style="left:496px;top:108px;width:1424px;height:1px;background:#d1d1d1;"></div>
<div class="b" style="left:1246px;top:82px;width:657px;height:26px;background:#efefd7;"></div>
<div class="b" style="left:980px;top:82px;width:129px;height:26px;background:#fbfbfb;"></div>
<svg class="b" style="left:506px;top:88px;" width="16" height="16" viewBox="0 0 16 16"><path d="M6 1h5v7H5.5v7H1V6h5z" fill="#b0bac1"/><path d="M1 5l4-4v4z" fill="#c9d0d5"/><g transform="translate(5 6.3) scale(0.96)"><path d="M4.9 0C2.4 0 2.6 1.1 2.6 1.1v1.1h2.4v.35H1.6S0 2.4 0 4.95c0 2.55 1.4 2.45 1.4 2.45h.85V6.2s-.05-1.4 1.4-1.4h2.4s1.3.02 1.3-1.3V1.35S7.55 0 4.9 0z" fill="#3f8fc7"/><path d="M5.1 10c2.5 0 2.3-1.1 2.3-1.1V7.8H5v-.35h3.4S10 7.6 10 5.05C10 2.5 8.6 2.6 8.6 2.6h-.85v1.2s.05 1.4-1.4 1.4h-2.4s-1.3-.02-1.3 1.3v2.15S2.45 10 5.1 10z" fill="#fcc624"/></g></svg>
<span class="t" style="left:523px;top:86px;line-height:20px;height:20px;letter-spacing:-0.296px;">test_Selenium.py</span>
<svg class="b" style="left:624px;top:91px;" width="8" height="8" viewBox="0 0 8 8"><path d="M.5.5l7 7M7.5.5l-7 7" stroke="#b4b4b4" stroke-width="1.1" fill="none"/></svg>
<svg class="b" style="left:649px;top:88px;" width="16" height="16" viewBox="0 0 16 16"><path d="M6 1h5v7H5.5v7H1V6h5z" fill="#b0bac1"/><path d="M1 5l4-4v4z" fill="#c9d0d5"/><g transform="translate(5 6.3) scale(0.96)"><path d="M4.9 0C2.4 0 2.6 1.1 2.6 1.1v1.1h2.4v.35H1.6S0 2.4 0 4.95c0 2.55 1.4 2.45 1.4 2.45h.85V6.2s-.05-1.4 1.4-1.4h2.4s1.3.02 1.3-1.3V1.35S7.55 0 4.9 0z" fill="#3f8fc7"/><path d="M5.1 10c2.5 0 2.3-1.1 2.3-1.1V7.8H5v-.35h3.4S10 7.6 10 5.05C10 2.5 8.6 2.6 8.6 2.6h-.85v1.2s.05 1.4-1.4 1.4h-2.4s-1.3-.02-1.3 1.3v2.15S2.45 10 5.1 10z" fill="#fcc624"/></g></svg>
<span class="t" style="left:666.5px;top:86px;line-height:20px;height:20px;letter-spacing:0.159px;">app.py</span>
<svg class="b" style="left:712px;top:91px;" width="8" height="8" viewBox="0 0 8 8"><path d="M.5.5l7 7M7.5.5l-7 7" stroke="#b4b4b4" stroke-width="1.1" fill="none"/></svg>
<svg class="b" style="left:737px;top:88px;" width="16" height="16" viewBox="0 0 16 16"><path d="M6 1h5v7H5.5v7H1V6h5z" fill="#b0bac1"/><path d="M1 5l4-4v4z" fill="#c9d0d5"/><g transform="translate(5 6.3) scale(0.96)"><path d="M4.9 0C2.4 0 2.6 1.1 2.6 1.1v1.1h2.4v.35H1.6S0 2.4 0 4.95c0 2.55 1.4 2.45 1.4 2.45h.85V6.2s-.05-1.4 1.4-1.4h2.4s1.3.02 1.3-1.3V1.35S7.55 0 4.9 0z" fill="#3f8fc7"/><path d="M5.1 10c2.5 0 2.3-1.1 2.3-1.1V7.8H5v-.35h3.4S10 7.6 10 5.05C10 2.5 8.6 2.6 8.6 2.6h-.85v1.2s.05 1.4-1.4 1.4h-2.4s-1.3-.02-1.3 1.3v2.15S2.45 10 5.1 10z" fill="#fcc624"/></g></svg>
<span class="t" style="left:754px;top:86px;line-height:20px;height:20px;letter-spacing:-0.139px;">main_page.py</span>
<svg class="b" style="left:840px;top:91px;" width="8" height="8" viewBox="0 0 8 8"><path d="M.5.5l7 7M7.5.5l-7 7" stroke="#b4b4b4" stroke-width="1.1" fill="none"/></svg>
<svg class="b" style="left:865px;top:88px;" width="16" height="16" viewBox="0 0 16 16"><path d="M6 1h5v7H5.5v7H1V6h5z" fill="#b0bac1"/><path d="M1 5l4-4v4z" fill="#c9d0d5"/><g transform="translate(5 6.3) scale(0.96)"><path d="M4.9 0C2.4 0 2.6 1.1 2.6 1.1v1.1h2.4v.35H1.6S0 2.4 0 4.95c0 2.55 1.4 2.45 1.4 2.45h.85V6.2s-.05-1.4 1.4-1.4h2.4s1.3.02 1.3-1.3V1.35S7.55 0 4.9 0z" fill="#3f8fc7"/><path d="M5.1 10c2.5 0 2.3-1.1 2.3-1.1V7.8H5v-.35h3.4S10 7.6 10 5.05C10 2.5 8.6 2.6 8.6 2.6h-.85v1.2s.05 1.4-1.4 1.4h-2.4s-1.3-.02-1.3 1.3v2.15S2.45 10 5.1 10z" fill="#fcc624"/></g></svg>
<span class="t" style="left:882px;top:86px;line-height:20px;height:20px;letter-spacing:-0.087px;">test_demo.py</span>
<svg class="b" style="left:964.5px;top:91px;" width="8" height="8" viewBox="0 0 8 8"><path d="M.5.5l7 7M7.5.5l-7 7" stroke="#b4b4b4" stroke-width="1.1" fill="none"/></svg>
<svg class="b" style="left:990px;top:88px;" width="16" height="16" viewBox="0 0 16 16"><path d="M6 1h5v7H5.5v7H1V6h5z" fill="#b0bac1"/><path d="M1 5l4-4v4z" fill="#c9d0d5"/><g transform="translate(5 6.3) scale(0.96)"><path d="M4.9 0C2.4 0 2.6 1.1 2.6 1.1v1.1h2.4v.35H1.6S0 2.4 0 4.95c0 2.55 1.4 2.45 1.4 2.45h.85V6.2s-.05-1.4 1.4-1.4h2.4s1.3.02 1.3-1.3V1.35S7.55 0 4.9 0z" fill="#3f8fc7"/><path d="M5.1 10c2.5 0 2.3-1.1 2.3-1.1V7.8H5v-.35h3.4S10 7.6 10 5.05C10 2.5 8.6 2.6 8.6 2.6h-.85v1.2s.05 1.4-1.4 1.4h-2.4s-1.3-.02-1.3 1.3v2.15S2.45 10 5.1 10z" fill="#fcc624"/></g></svg>
<span class="t" style="left:1007.5px;top:86px;line-height:20px;height:20px;letter-spacing:-0.141px;">base_page.py</span>
<svg class="b" style="left:1093.5px;top:91px;" width="8" height="8" viewBox="0 0 8 8"><path d="M.5.5l7 7M7.5.5l-7 7" stroke="#b4b4b4" stroke-width="1.1" fill="none"/></svg>
<svg class="b" style="left:1118px;top:88px;" width="16" height="16" viewBox="0 0 16 16"><path d="M6 1h5v7H5.5v7H1V6h5z" fill="#b0bac1"/><path d="M1 5l4-4v4z" fill="#c9d0d5"/><g transform="translate(5 6.3) scale(0.96)"><path d="M4.9 0C2.4 0 2.6 1.1 2.6 1.1v1.1h2.4v.35H1.6S0 2.4 0 4.95c0 2.55 1.4 2.45 1.4 2.45h.85V6.2s-.05-1.4 1.4-1.4h2.4s1.3.02 1.3-1.3V1.35S7.55 0 4.9 0z" fill="#3f8fc7"/><path d="M5.1 10c2.5 0 2.3-1.1 2.3-1.1V7.8H5v-.35h3.4S10 7.6 10 5.05C10 2.5 8.6 2.6 8.6 2.6h-.85v1.2s.05 1.4-1.4 1.4h-2.4s-1.3-.02-1.3 1.3v2.15S2.45 10 5.1 10z" fill="#fcc624"/></g></svg>
<span class="t" style="left:1135px;top:86px;line-height:20px;height:20px;letter-spacing:-0.180px;">search_page.py</span>
<svg class="b" style="left:1231px;top:91px;" width="8" height="8" viewBox="0 0 8 8"><path d="M.5.5l7 7M7.5.5l-7 7" stroke="#b4b4b4" stroke-width="1.1" fill="none"/></svg>
<svg class="b" style="left:1256px;top:88px;" width="16" height="16" viewBox="0 0 16 16"><path d="M6 1h5v7H5.5v7H1V6h5z" fill="#b0bac1"/><path d="M1 5l4-4v4z" fill="#c9d0d5"/><g transform="translate(5 6.3) scale(0.96)"><path d="M4.9 0C2.4 0 2.6 1.1 2.6 1.1v1.1h2.4v.35H1.6S0 2.4 0 4.95c0 2.55 1.4 2.45 1.4 2.45h.85V6.2s-.05-1.4 1.4-1.4h2.4s1.3.02 1.3-1.3V1.35S7.55 0 4.9 0z" fill="#3f8fc7"/><path d="M5.1 10c2.5 0 2.3-1.1 2.3-1.1V7.8H5v-.35h3.4S10 7.6 10 5.05C10 2.5 8.6 2.6 8.6 2.6h-.85v1.2s.05 1.4-1.4 1.4h-2.4s-1.3-.02-1.3 1.3v2.15S2.45 10 5.1 10z" fill="#fcc624"/></g></svg>
<span class="t" style="left:1273.5px;top:86px;line-height:20px;height:20px;letter-spacing:-0.359px;">remote\__init__.py</span>
<svg class="b" style="left:1380px;top:91px;" width="8" height="8" viewBox="0 0 8 8"><path d="M.5.5l7 7M7.5.5l-7 7" stroke="#b4b4b4" stroke-width="1.1" fill="none"/></svg>
<svg class="b" style="left:1405px;top:88px;" width="16" height="16" viewBox="0 0 16 16"><path d="M6 1h5v7H5.5v7H1V6h5z" fill="#b0bac1"/><path d="M1 5l4-4v4z" fill="#c9d0d5"/><g transform="translate(5 6.3) scale(0.96)"><path d="M4.9 0C2.4 0 2.6 1.1 2.6 1.1v1.1h2.4v.35H1.6S0 2.4 0 4.95c0 2.55 1.4 2.45 1.4 2.45h.85V6.2s-.05-1.4 1.4-1.4h2.4s1.3.02 1.3-1.3V1.35S7.55 0 4.9 0z" fill="#3f8fc7"/><path d="M5.1 10c2.5 0 2.3-1.1 2.3-1.1V7.8H5v-.35h3.4S10 7.6 10 5.05C10 2.5 8.6 2.6 8.6 2.6h-.85v1.2s.05 1.4-1.4 1.4h-2.4s-1.3-.02-1.3 1.3v2.15S2.45 10 5.1 10z" fill="#fcc624"/></g></svg>
<span class="t" style="left:1422px;top:86px;line-height:20px;height:20px;letter-spacing:-0.279px;">webdriver\__init__.py</span>
<svg class="b" style="left:1545px;top:91px;" width="8" height="8" viewBox="0 0 8 8"><path d="M.5.5l7 7M7.5.5l-7 7" stroke="#b4b4b4" stroke-width="1.1" fill="none"/></svg>
<svg class="b" style="left:1570px;top:88px;" width="16" height="16" viewBox="0 0 16 16"><path d="M6 1h5v7H5.5v7H1V6h5z" fill="#b0bac1"/><path d="M1 5l4-4v4z" fill="#c9d0d5"/><g transform="translate(5 6.3) scale(0.96)"><path d="M4.9 0C2.4 0 2.6 1.1 2.6 1.1v1.1h2.4v.35H1.6S0 2.4 0 4.95c0 2.55 1.4 2.45 1.4 2.45h.85V6.2s-.05-1.4 1.4-1.4h2.4s1.3.02 1.3-1.3V1.35S7.55 0 4.9 0z" fill="#3f8fc7"/><path d="M5.1 10c2.5 0 2.3-1.1 2.3-1.1V7.8H5v-.35h3.4S10 7.6 10 5.05C10 2.5 8.6 2.6 8.6 2.6h-.85v1.2s.05 1.4-1.4 1.4h-2.4s-1.3-.02-1.3 1.3v2.15S2.45 10 5.1 10z" fill="#fcc624"/></g></svg>
<span class="t" style="left:1587px;top:86px;line-height:20px;height:20px;letter-spacing:0.213px;">chrome\webdriver.py</span>
<svg class="b" style="left:1717px;top:91px;" width="8" height="8" viewBox="0 0 8 8"><path d="M.5.5l7 7M7.5.5l-7 7" stroke="#b4b4b4" stroke-width="1.1" fill="none"/></svg>
<svg class="b" style="left:1742px;top:88px;" width="16" height="16" viewBox="0 0 16 16"><path d="M6 1h5v7H5.5v7H1V6h5z" fill="#b0bac1"/><path d="M1 5l4-4v4z" fill="#c9d0d5"/><g transform="translate(5 6.3) scale(0.96)"><path d="M4.9 0C2.4 0 2.6 1.1 2.6 1.1v1.1h2.4v.35H1.6S0 2.4 0 4.95c0 2.55 1.4 2.45 1.4 2.45h.85V6.2s-.05-1.4 1.4-1.4h2.4s1.3.02 1.3-1.3V1.35S7.55 0 4.9 0z" fill="#3f8fc7"/><path d="M5.1 10c2.5 0 2.3-1.1 2.3-1.1V7.8H5v-.35h3.4S10 7.6 10 5.05C10 2.5 8.6 2.6 8.6 2.6h-.85v1.2s.05 1.4-1.4 1.4h-2.4s-1.3-.02-1.3 1.3v2.15S2.45 10 5.1 10z" fill="#fcc624"/></g></svg>
<span class="t" style="left:1759px;top:86px;line-height:20px;height:20px;letter-spacing:0.260px;">remote\webdriver.py</span>
<svg class="b" style="left:1887px;top:91px;" width="8" height="8" viewBox="0 0 8 8"><path d="M.5.5l7 7M7.5.5l-7 7" stroke="#b4b4b4" stroke-width="1.1" fill="none"/></svg>
<div class="b" style="left:980px;top:105px;width:129px;height:3px;background:#4083c9;"></div>
<!-- editor body -->
<div class="b" style="left:496px;top:109px;width:1424px;height:685px;background:#fff;"></div>
<div class="b" style="left:496px;top:109px;width:56px;height:685px;background:#f0f0f0;"></div>
<div class="b" style="left:552px;top:109px;width:1px;height:685px;background:#d9d9d9;"></div>
<div class="b" style="left:1518px;top:109px;width:1px;height:685px;background:#e6e6e6;"></div>
<div class="b" style="left:496px;top:500px;width:1424px;height:21px;background:#fffae3;"></div>
<div class="b" style="left:496px;top:500px;width:56px;height:21px;background:#fbf6e4;"></div>
<div class="b" style="left:622px;top:500px;width:336px;height:21px;background:#f5eabc;"></div>
<div class="b" style="left:878px;top:502px;width:8px;height:18px;background:#99ccff;"></div>
<div class="b" style="left:950px;top:502px;width:8px;height:18px;background:#99ccff;"></div>
<div class="b" style="left:588px;top:227px;width:1px;height:21px;background:#dedede;"></div>
<div class="b" style="left:588px;top:290px;width:1px;height:21px;background:#dedede;"></div>
<div class="b" style="left:588px;top:353px;width:1px;height:168px;background:#dedede;"></div>
<div class="b" style="left:620px;top:395px;width:1px;height:21px;background:#dedede;"></div>
<div class="b" style="left:620px;top:437px;width:1px;height:42px;background:#dedede;"></div>
<div class="b" style="left:588px;top:563px;width:1px;height:21px;background:#dedede;"></div>
<div class="b" style="left:588px;top:626px;width:1px;height:168px;background:#dedede;"></div>
<div class="b" style="left:620px;top:668px;width:1px;height:126px;background:#dedede;"></div>
<div class="b" style="left:652px;top:710px;width:1px;height:21px;background:#dedede;"></div>
<div class="b" style="left:652px;top:752px;width:1px;height:42px;background:#dedede;"></div>
<div class="b m" style="left:0;top:109px;width:1920px;height:685px;overflow:hidden">
<span class="ln" style="top:-8px">6</span>
<span class="cl" style="top:-8px"><span class="k">from</span> selenium.webdriver.common.by <span class="k">import</span> By</span>
<span class="ln" style="top:13px">7</span>
<span class="cl" style="top:13px"><span class="k">from</span> selenium.webdriver.remote.webdriver <span class="k">import</span> WebDriver</span>
<span class="ln" style="top:34px">8</span>
<span class="ln" style="top:55px">9</span>
<span class="cl" style="top:55px"><span style="text-decoration:underline wavy #b8b8b8 1px;text-underline-offset:1px"><span class="k">class</span> BasePage:</span></span>
<span class="ln" style="top:76px">10</span>
<span class="ln" style="top:97px">11</span>
<span class="cl" style="top:97px">    _back_list = [(By.ID, <span class="s">&quot;image_cancel&quot;</span>),</span>
<span class="ln" style="top:118px">12</span>
<span class="cl" style="top:118px">                  (By.ID, <span class="s">&quot;&quot;</span>)]</span>
<span class="ln" style="top:139px">13</span>
<span class="cl" style="top:139px">    <span class="c"># 指定类型</span></span>
<span class="ln" style="top:160px">14</span>
<span class="cl" style="top:160px">    <span style="text-decoration:underline wavy #b8b8b8 1px;text-underline-offset:1px"><span class="k">def</span> <span class="dm">__init__</span>(<span class="sf">self</span>, driver: WebDriver):</span></span>
<span class="ln" style="top:181px">15</span>
<span class="cl" style="top:181px">        <span class="sf">self</span>.driver = driver</span>
<span class="ln" style="top:202px">16</span>
<span class="ln" style="top:223px">17</span>
<span class="cl" style="top:223px">    <span class="k">def</span> find_element(<span class="sf">self</span>, locator):</span>
<span class="ln" style="top:244px">18</span>
<span class="cl" style="top:244px">        <span class="c"># 异常判断</span></span>
<span class="ln" style="top:265px">19</span>
<span class="cl" style="top:265px">        <span class="k">try</span>:</span>
<span class="ln" style="top:286px">20</span>
<span class="cl" style="top:286px">            <span class="k">return</span><span style="text-decoration:underline wavy #b8b8b8 1px;text-underline-offset:1px">  </span><span class="sf">self</span>.driver.find_element(*locator)</span>
<span class="ln" style="top:307px">21</span>
<span class="cl" style="top:307px">        <span style="text-decoration:underline wavy #b8b8b8 1px;text-underline-offset:1px"><span class="k">except</span></span>:</span>
<span class="ln" style="top:328px">22</span>
<span class="cl" style="top:328px">            <span class="sf">self</span>.handle_exception()</span>
<span class="ln" style="top:349px">23</span>
<span class="cl" style="top:349px">            <span class="k">return</span> <span class="sf">self</span>.find_element(locator)</span>
<span class="ln" style="top:370px">24</span>
<span class="ln" style="top:391px">25</span>
<span class="cl" style="top:391px">        <span class="k">return</span><span style="text-decoration:underline wavy #b8b8b8 1px;text-underline-offset:1px">  </span><span class="sf">self</span>.driver.find_element(*locator)</span>
<span class="ln" style="top:412px">26</span>
<span class="ln" style="top:433px">27</span>
<span class="cl" style="top:433px">    <span class="k">def</span> find_element_and_click(<span class="sf">self</span>, locator):</span>
<span class="ln" style="top:454px">28</span>
<span class="cl" style="top:454px">        <span class="sf">self</span>.find_element(locator).click()</span>
<span class="ln" style="top:475px">29</span>
<span class="ln" style="top:496px">30</span>
<span class="cl" style="top:496px">    <span class="k">def</span> handle_exception(<span class="sf">self</span>):</span>
<span class="ln" style="top:517px">31</span>
<span class="cl" style="top:517px">        <span class="c"># 广告 好评 升级</span></span>
<span class="ln" style="top:538px">32</span>
<span class="cl" style="top:538px">        <span class="k">for</span> locator <span class="k">in</span> <span class="sf">self</span>._back_list:</span>
<span class="ln" style="top:559px">33</span>
<span class="cl" style="top:559px">            elements = <span class="sf">self</span>.driver.find_elements(*locator)</span>
<span class="ln" style="top:580px">34</span>
<span class="cl" style="top:580px">            <span class="k">if</span> <span class="bi">len</span>(elements) >= <span class="n">1</span>:</span>
<span class="ln" style="top:601px">35</span>
<span class="cl" style="top:601px">                elements[<span class="n">0</span>].click()</span>
<span class="ln" style="top:622px">36</span>
<span class="cl" style="top:622px">            <span class="k">else</span>:</span>
<span class="ln" style="top:643px">37</span>
<span class="cl" style="top:643px">                <span class="bi">print</span>(<span class="s">&quot;{} not fount&quot;</span>.format(locator))</span>
<span class="ln" style="top:664px">38</span>
</div>
<svg class="b" style="left:548px;top:127.0px;" width="9" height="11" viewBox="0 0 9 11"><path d="M.5 10.5h8V5l-4-4-4 4z" fill="#fff" stroke="#c8c8c8"/><path d="M2.5 7h4" stroke="#b0b0b0" stroke-width="1"/></svg>
<svg class="b" style="left:548px;top:170.5px;" width="9" height="11" viewBox="0 0 9 11"><path d="M.5.5h8v5.5l-4 4-4-4z" fill="#fff" stroke="#c8c8c8"/><path d="M2.5 4h4" stroke="#b0b0b0" stroke-width="1"/></svg>
<svg class="b" style="left:548px;top:212.5px;" width="9" height="11" viewBox="0 0 9 11"><path d="M.5.5h8v5.5l-4 4-4-4z" fill="#fff" stroke="#c8c8c8"/><path d="M2.5 4h4" stroke="#b0b0b0" stroke-width="1"/></svg>
<svg class="b" style="left:548px;top:232.0px;" width="9" height="11" viewBox="0 0 9 11"><path d="M.5 10.5h8V5l-4-4-4 4z" fill="#fff" stroke="#c8c8c8"/><path d="M2.5 7h4" stroke="#b0b0b0" stroke-width="1"/></svg>
<svg class="b" style="left:548px;top:275.5px;" width="9" height="11" viewBox="0 0 9 11"><path d="M.5.5h8v5.5l-4 4-4-4z" fill="#fff" stroke="#c8c8c8"/><path d="M2.5 4h4" stroke="#b0b0b0" stroke-width="1"/></svg>
<svg class="b" style="left:548px;top:295.0px;" width="9" height="11" viewBox="0 0 9 11"><path d="M.5 10.5h8V5l-4-4-4 4z" fill="#fff" stroke="#c8c8c8"/><path d="M2.5 7h4" stroke="#b0b0b0" stroke-width="1"/></svg>
<svg class="b" style="left:548px;top:338.5px;" width="9" height="11" viewBox="0 0 9 11"><path d="M.5.5h8v5.5l-4 4-4-4z" fill="#fff" stroke="#c8c8c8"/><path d="M2.5 4h4" stroke="#b0b0b0" stroke-width="1"/></svg>
<svg class="b" style="left:548px;top:422.5px;" width="9" height="11" viewBox="0 0 9 11"><path d="M.5.5h8v5.5l-4 4-4-4z" fill="#fff" stroke="#c8c8c8"/><path d="M2.5 4h4" stroke="#b0b0b0" stroke-width="1"/></svg>
<svg class="b" style="left:548px;top:463.0px;" width="9" height="11" viewBox="0 0 9 11"><path d="M.5 10.5h8V5l-4-4-4 4z" fill="#fff" stroke="#c8c8c8"/><path d="M2.5 7h4" stroke="#b0b0b0" stroke-width="1"/></svg>
<svg class="b" style="left:548px;top:505.0px;" width="9" height="11" viewBox="0 0 9 11"><path d="M.5 10.5h8V5l-4-4-4 4z" fill="#fff" stroke="#c8c8c8"/><path d="M2.5 7h4" stroke="#b0b0b0" stroke-width="1"/></svg>
<svg class="b" style="left:548px;top:548.5px;" width="9" height="11" viewBox="0 0 9 11"><path d="M.5.5h8v5.5l-4 4-4-4z" fill="#fff" stroke="#c8c8c8"/><path d="M2.5 4h4" stroke="#b0b0b0" stroke-width="1"/></svg>
<svg class="b" style="left:548px;top:568.0px;" width="9" height="11" viewBox="0 0 9 11"><path d="M.5 10.5h8V5l-4-4-4 4z" fill="#fff" stroke="#c8c8c8"/><path d="M2.5 7h4" stroke="#b0b0b0" stroke-width="1"/></svg>
<svg class="b" style="left:548px;top:611.5px;" width="9" height="11" viewBox="0 0 9 11"><path d="M.5.5h8v5.5l-4 4-4-4z" fill="#fff" stroke="#c8c8c8"/><path d="M2.5 4h4" stroke="#b0b0b0" stroke-width="1"/></svg>
<svg class="b" style="left:548px;top:653.5px;" width="9" height="11" viewBox="0 0 9 11"><path d="M.5.5h8v5.5l-4 4-4-4z" fill="#fff" stroke="#c8c8c8"/><path d="M2.5 4h4" stroke="#b0b0b0" stroke-width="1"/></svg>
<svg class="b" style="left:548px;top:757.0px;" width="9" height="11" viewBox="0 0 9 11"><path d="M.5 10.5h8V5l-4-4-4 4z" fill="#fff" stroke="#c8c8c8"/><path d="M2.5 7h4" stroke="#b0b0b0" stroke-width="1"/></svg>
<svg class="b" style="left:548px;top:109px;" width="9" height="9.5" viewBox="0 1.5 9 9.5"><path d="M.5.5h8v5.5l-4 4-4-4z" fill="#fff" stroke="#c8c8c8"/><path d="M2.5 4h4" stroke="#b0b0b0" stroke-width="1"/></svg>
<svg class="b" style="left:523.5px;top:168px;" width="16" height="13" viewBox="0 0 16 13"><circle cx="5" cy="6.5" r="3.7" fill="#62b8de"/><circle cx="5" cy="6.5" r="1.5" fill="none" stroke="#3a5a6e" stroke-width=".9"/><path d="M11.5 0v10M9.3 8l2.2 2.5L13.7 8" fill="none" stroke="#5a5a5a" stroke-width="1.1"/></svg>
<svg class="b" style="left:567px;top:499px;" width="11" height="18" viewBox="0 0 11 18"><circle cx="5.5" cy="5.5" r="4.7" fill="#f0a30a"/><rect x="3.3" y="8" width="4.4" height="3.3" fill="#f0a30a"/><rect x="3" y="12.7" width="5" height="1" fill="#555"/><rect x="3" y="14.7" width="5" height="1" fill="#555"/></svg>
<div class="b" style="left:958px;top:501px;width:2px;height:19px;background:#000;"></div>
<svg class="b" style="left:1791px;top:115px;" width="12" height="11" viewBox="0 0 12 11"><path d="M6 .2l5.9 10.7H.1z" fill="#f0c20a"/><rect x="5.1" y="4" width="1.8" height="3.3" fill="#fff"/><rect x="5.1" y="8.3" width="1.8" height="1.6" fill="#fff"/></svg>
<span class="t" style="left:1807px;top:112px;line-height:20px;height:20px;color:#7a7a7a;">1</span>
<svg class="b" style="left:1821px;top:115px;" width="12" height="11" viewBox="0 0 12 11"><path d="M6 .2l5.9 10.7H.1z" fill="#d9cfae"/><rect x="5.1" y="4" width="1.8" height="3.3" fill="#fff"/><rect x="5.1" y="8.3" width="1.8" height="1.6" fill="#fff"/></svg>
<span class="t" style="left:1836px;top:112px;line-height:20px;height:20px;color:#7a7a7a;">7</span>
<svg class="b" style="left:1850px;top:115px;" width="14" height="14" viewBox="0 0 14 14"><path d="M1.5 6l3.5 3.5L12 1.5" fill="none" stroke="#59a869" stroke-width="2.6"/><path d="M1 12.5l2-1.5 2 1.5 2-1.5 2 1.5 2-1.5" fill="none" stroke="#59a869" stroke-width="1"/></svg>
<span class="t" style="left:1866px;top:112px;line-height:20px;height:20px;color:#7a7a7a;">1</span>
<svg class="b" style="left:1883px;top:118px;" width="10" height="7" viewBox="0 0 10 7"><path d="M1 6l4-4.2L9 6" fill="none" stroke="#6e6e6e" stroke-width="1.5"/></svg>
<svg class="b" style="left:1904px;top:119px;" width="10" height="7" viewBox="0 0 10 7"><path d="M1 1l4 4.2L9 1" fill="none" stroke="#6e6e6e" stroke-width="1.5"/></svg>
<div class="b" style="left:1907px;top:254px;width:13px;height:2px;background:#d9cfa5;"></div>
<div class="b" style="left:1907px;top:329px;width:13px;height:2px;background:#d9cfa5;"></div>
<div class="b" style="left:1907px;top:419px;width:13px;height:2px;background:#d9cfa5;"></div>
<div class="b" style="left:1907px;top:435px;width:13px;height:2px;background:#d9cfa5;"></div>
<div class="b" style="left:1907px;top:494px;width:13px;height:2px;background:#ebc700;"></div>
<div class="b" style="left:1907px;top:704px;width:13px;height:2px;background:#d9cfa5;"></div>
<div class="b" style="left:1911px;top:216px;width:9px;height:487px;background:rgba(0,0,0,.115);border-left:1px solid rgba(0,0,0,.05);box-sizing:border-box;"></div>
<div class="b" style="left:565px;top:319px;width:662px;height:208px;border:3px solid #fb3535;box-sizing:border-box;"></div>
<svg class="b" style="left:1225px;top:160px;" width="245" height="225" viewBox="1225 160 245 225"><defs><linearGradient id="ag" gradientUnits="userSpaceOnUse" x1="1461.7" y1="167.2" x2="1232" y2="378"><stop offset="0" stop-color="#fb3535" stop-opacity=".15"/><stop offset=".2" stop-color="#fb3535"/></linearGradient></defs><path d="M1232 378L1241.3 360.8 1241.3 365.2 1461.5 166.9 1462 167.5 1245.6 369.9 1250.2 370.5z" fill="url(#ag)"/></svg>
<span class="t" style="left:1472px;top:161px;line-height:36px;height:36px;font-size:29px;color:#f53a3a;font-family:'Noto Sans CJK SC',sans-serif;">异常处理功能</span>
<!-- breadcrumbs -->
<div class="b" style="left:496px;top:794px;width:1424px;height:1px;background:#d1d1d1;"></div>
<span class="t" style="left:562.5px;top:796.5px;line-height:20px;height:20px;color:#6b6b6b;letter-spacing:-0.500px;">BasePage</span>
<svg class="b" style="left:630px;top:802px;" width="6" height="9" viewBox="0 0 6 9"><path d="M1 1l3 3.5L1 8" fill="none" stroke="#9a9a9a" stroke-width="1.2"/></svg>
<span class="t" style="left:643px;top:796.5px;line-height:20px;height:20px;color:#6b6b6b;letter-spacing:-0.151px;">find_element()</span>
<!-- terminal -->
<div class="b" style="left:22px;top:845px;width:1898px;height:1px;background:#d1d1d1;"></div>
<span class="t" style="left:28px;top:823px;line-height:20px;height:20px;letter-spacing:0.028px;">Terminal:</span>
<span class="t" style="left:100px;top:823px;line-height:20px;height:20px;letter-spacing:-0.216px;">Local</span>
<svg class="b" style="left:137px;top:828.5px;" width="8" height="8" viewBox="0 0 8 8"><path d="M.5.5l7 7M7.5.5l-7 7" stroke="#b4b4b4" stroke-width="1.1" fill="none"/></svg>
<div class="b" style="left:88px;top:843px;width:68px;height:3px;background:#9aa7c4;"></div>
<svg class="b" style="left:165px;top:826px;" width="12" height="12" viewBox="0 0 12 12"><path d="M6 1v10M1 6h10" stroke="#6e6e6e" stroke-width="1.6"/></svg>
<svg class="b" style="left:1875px;top:824.5px;" width="14" height="14" viewBox="0 0 14 14"><g fill="#6e6e6e"><circle cx="7" cy="7" r="4.7"/><rect x="5.3" y=".3" width="3.4" height="13.4" rx=".8"/><rect x="5.3" y=".3" width="3.4" height="13.4" rx=".8" transform="rotate(60 7 7)"/><rect x="5.3" y=".3" width="3.4" height="13.4" rx=".8" transform="rotate(120 7 7)"/></g><circle cx="7" cy="7" r="2" fill="#f2f2f2"/></svg>
<div class="b" style="left:1902px;top:831px;width:12px;height:2px;background:#6e6e6e;"></div>
<div class="b" style="left:22px;top:846px;width:1885px;height:151px;background:#fff;"></div>
<div class="b" style="left:1907px;top:846px;width:13px;height:151px;background:#f5f5f5;"></div>
<div class="b" style="left:1911px;top:969px;width:9px;height:28px;background:#dcdcdc;"></div>
<div class="b m" style="left:26px;top:848px;width:1880px;height:149px;overflow:hidden;color:#1a1a1a">
<span class="t" style="left:0;top:0px;height:21px;line-height:21px"><span style="color:#e21818">=============================================================== 1 failed</span>, <span style="color:#00c400">1 passed</span>, <span style="color:#cfa414">6 skipped</span><span style="color:#e21818"> in 26.40s ================================================================</span></span>
<span class="t" style="left:0;top:42px;height:21px;line-height:21px">C:\workpath\pythonTestAbleSky\StudySelenium&gt;from selenium import webdriver</span>
<span class="t" style="left:0;top:63px;height:21px;line-height:21px">&#x27;from&#x27; <span class="zh">不是内部或外部命令，也不是可运行的程序</span></span>
<span class="t" style="left:0;top:84px;height:21px;line-height:21px"><span class="zh">或批处理文件。</span></span>
<span class="t" style="left:0;top:126px;height:21px;line-height:21px">C:\workpath\pythonTestAbleSky\StudySelenium&gt;</span>
</div>
<div class="b" style="left:378px;top:972px;width:9px;height:21px;border:1px solid #000;box-sizing:border-box;"></div>
<div class="b" style="left:0px;top:997px;width:1920px;height:1px;background:#d1d1d1;"></div>
<!-- bottom strip -->
<div class="b" style="left:344px;top:998px;width:83px;height:21px;background:#c0c0c0;"></div>
<svg class="b" style="left:32px;top:1003px;" width="9" height="11" viewBox="0 0 9 11"><path d="M.5.5l8 5-8 5z" fill="#6e6e6e"/></svg>
<span class="t" style="left:47px;top:1000px;line-height:20px;height:20px;font-size:11px;letter-spacing:0.263px;"><u>4</u>: Run</span>
<svg class="b" style="left:103px;top:1004px;" width="11" height="10" viewBox="0 0 11 10"><g fill="#6e6e6e"><rect x="0" y=".5" width="2" height="2"/><rect x="3" y=".5" width="8" height="2"/><rect x="0" y="4" width="2" height="2"/><rect x="3" y="4" width="8" height="2"/><rect x="0" y="7.5" width="2" height="2"/><rect x="3" y="7.5" width="8" height="2"/></g></svg>
<span class="t" style="left:118px;top:1000px;line-height:20px;height:20px;font-size:11px;letter-spacing:0.105px;">TODO</span>
<svg class="b" style="left:171px;top:1003px;" width="11" height="11" viewBox="0 0 11 11"><circle cx="5.5" cy="5.5" r="5.5" fill="#6e6e6e"/><rect x="4.7" y="2.2" width="1.6" height="4" fill="#f2f2f2"/><rect x="4.7" y="7.2" width="1.6" height="1.6" fill="#f2f2f2"/></svg>
<span class="t" style="left:187px;top:1000px;line-height:20px;height:20px;font-size:11px;letter-spacing:0.209px;"><u>6</u>: Problems</span>
<svg class="b" style="left:270px;top:1003px;" width="12" height="12" viewBox="0 0 12 12"><ellipse cx="6" cy="6.8" rx="3.9" ry="4.7" fill="#6e6e6e"/><path d="M3.5.5l1.7 2M8.5.5l-1.7 2M.5 4.5h11M0 7.5h12M1 11l2.5-1.2M11 11l-2.5-1.2" stroke="#6e6e6e" stroke-width="1.1" fill="none"/></svg>
<span class="t" style="left:287px;top:1000px;line-height:20px;height:20px;font-size:11px;letter-spacing:0.293px;"><u>5</u>: Debug</span>
<svg class="b" style="left:355px;top:1003px;" width="12" height="11" viewBox="0 0 12 11"><rect width="12" height="11" fill="#6e6e6e"/><path d="M2.5 3l2.5 2.5L2.5 8" fill="none" stroke="#c0c0c0" stroke-width="1.1"/><rect x="6" y="7.5" width="3.5" height="1" fill="#c0c0c0"/></svg>
<span class="t" style="left:372px;top:1000px;line-height:20px;height:20px;font-size:11px;letter-spacing:0.428px;">Terminal</span>
<svg class="b" style="left:440px;top:1003px;" width="12" height="12" viewBox="0 0 12 12"><path d="M.7 5.4C.7 3 2.1.7 4.9.7h.7c1.5 0 2.4.8 2.4 2.1v2.6H5.1c-1.3 0-2 .8-2 2V8.3H2.5C1.3 8.3.7 7.4.7 5.4z" fill="#6e6e6e"/><path d="M11.3 6.6c0 2.4-1.4 4.7-4.2 4.7h-.7c-1.5 0-2.4-.8-2.4-2.1V6.6h2.9c1.3 0 2-.8 2-2V3.7h.6c1.2 0 1.8.9 1.8 2.9z" fill="#6e6e6e"/></svg>
<span class="t" style="left:457px;top:1000px;line-height:20px;height:20px;font-size:11px;letter-spacing:0.381px;">Python Console</span>
<div class="b" style="left:0px;top:1019px;width:1920px;height:1px;background:#d1d1d1;"></div>
<!-- status bar -->
<svg class="b" style="left:6px;top:1024px;" width="13" height="13" viewBox="0 0 13 13"><rect x="2.5" y=".5" width="10" height="10" fill="none" stroke="#6e6e6e"/><path d="M.5 2.5v10h10" fill="none" stroke="#6e6e6e"/></svg>
<span class="t" style="left:27px;top:1019.5px;line-height:20px;height:20px;letter-spacing:-0.022px;">This code is unreachable</span>
<span class="t" style="left:1633px;top:1019.5px;line-height:20px;height:20px;letter-spacing:-0.509px;">25:51</span>
<span class="t" style="left:1676px;top:1019.5px;line-height:20px;height:20px;letter-spacing:-1.488px;">CRLF</span>
<span class="t" style="left:1717px;top:1019.5px;line-height:20px;height:20px;letter-spacing:-0.769px;">UTF-8</span>
<span class="t" style="left:1762px;top:1019.5px;line-height:20px;height:20px;letter-spacing:-0.506px;">4 spaces</span>
<div class="b" style="left:1899px;top:1029px;width:8px;height:6px;background:#6e6e6e;"></div>
<!-- task bar -->
<div class="b" style="left:0px;top:1039px;width:1920px;height:1px;background:#fafafa;"></div>
<div class="b" style="left:0px;top:1040px;width:1920px;height:8px;background:#1a1a1a;"></div>
<div class="b" style="left:636px;top:1040px;width:48px;height:8px;background:#4b4b4b;"></div>
<div class="b" style="left:1915px;top:1040px;width:1px;height:8px;background:#8a8a8a;"></div>
<div class="b" style="left:1800px;top:1040px;width:80px;height:8px;overflow:hidden"><span class="t" style="left:16px;top:3.5px;line-height:14px;color:#fff;font-size:12px">11:45</span></div>
<!-- activation watermark -->
<!-- performance widget -->
<svg class="b" style="left:1699px;top:970px;" width="110" height="70" viewBox="0 0 110 70"><defs><linearGradient id="rg" x1="0.5" y1="0" x2="0.2" y2="1"><stop offset="0" stop-color="#35e0d6"/><stop offset=".55" stop-color="#7be07a"/><stop offset=".85" stop-color="#f3d23b"/><stop offset="1" stop-color="#f5a53a"/></linearGradient></defs><rect x="50" y="13" width="52" height="42" fill="#2f3340"/><rect x="50" y="33.5" width="52" height="1" fill="#3c4150"/><path d="M66 27v-7.5M62.8 22.5L66 19.3l3.2 3.2" fill="none" stroke="#3db8f5" stroke-width="1.5"/><path d="M66 40v7.5M62.8 44.5L66 47.7l3.2-3.2" fill="none" stroke="#2fc343" stroke-width="1.5"/><text x="88" y="28" font-family="Liberation Sans,sans-serif" font-size="12" fill="#fff">0K</text><text x="88" y="49" font-family="Liberation Sans,sans-serif" font-size="12" fill="#fff">0K</text><circle cx="30" cy="34" r="30" fill="#555b6e" fill-opacity=".93"/><circle cx="30" cy="34" r="27" fill="#5a6073" fill-opacity=".5"/><path d="M31.8 8.6A25.5 25.5 0 1 1 4.7 37.5" fill="none" stroke="url(#rg)" stroke-width="1.6"/><text x="14" y="43" font-family="Liberation Sans,sans-serif" font-size="25" fill="#fff" stroke="#585e70" stroke-width=".7" letter-spacing="-1">73</text><text x="40.5" y="43" font-family="Liberation Sans,sans-serif" font-size="11" fill="#fff" textLength="9" lengthAdjust="spacingAndGlyphs">%</text></svg>
<!-- ime mascot widget -->
<svg class="b" style="left:1797px;top:972px;" width="105" height="69" viewBox="0 0 105 69"><defs><linearGradient id="lg" x1="0" y1="0" x2="0" y2="1"><stop offset="0" stop-color="#c4ecaa"/><stop offset="1" stop-color="#dff6cb"/></linearGradient></defs><rect x=".7" y=".7" width="103.6" height="67.6" rx="8" fill="url(#lg)" stroke="#8fd46a" stroke-width="1.4"/><g fill="#f3fde8" stroke="#8ad45c" stroke-width="1.6"><circle cx="11.5" cy="10.5" r="4.4"/><circle cx="11.5" cy="58.5" r="4.4"/><circle cx="19.7" cy="10.5" r="4.4"/><circle cx="19.7" cy="58.5" r="4.4"/><circle cx="27.9" cy="10.5" r="4.4"/><circle cx="27.9" cy="58.5" r="4.4"/><circle cx="36.1" cy="10.5" r="4.4"/><circle cx="36.1" cy="58.5" r="4.4"/><circle cx="44.3" cy="10.5" r="4.4"/><circle cx="44.3" cy="58.5" r="4.4"/><circle cx="52.5" cy="10.5" r="4.4"/><circle cx="52.5" cy="58.5" r="4.4"/><circle cx="60.7" cy="10.5" r="4.4"/><circle cx="60.7" cy="58.5" r="4.4"/><circle cx="68.9" cy="10.5" r="4.4"/><circle cx="68.9" cy="58.5" r="4.4"/><circle cx="77.1" cy="10.5" r="4.4"/><circle cx="77.1" cy="58.5" r="4.4"/><circle cx="85.3" cy="10.5" r="4.4"/><circle cx="85.3" cy="58.5" r="4.4"/><circle cx="93.5" cy="10.5" r="4.4"/><circle cx="93.5" cy="58.5" r="4.4"/><circle cx="10.5" cy="10.8" r="4.4"/><circle cx="94.5" cy="10.8" r="4.4"/><circle cx="10.5" cy="18.8" r="4.4"/><circle cx="94.5" cy="18.8" r="4.4"/><circle cx="10.5" cy="26.7" r="4.4"/><circle cx="94.5" cy="26.7" r="4.4"/><circle cx="10.5" cy="34.7" r="4.4"/><circle cx="94.5" cy="34.7" r="4.4"/><circle cx="10.5" cy="42.6" r="4.4"/><circle cx="94.5" cy="42.6" r="4.4"/><circle cx="10.5" cy="50.5" r="4.4"/><circle cx="94.5" cy="50.5" r="4.4"/><circle cx="10.5" cy="58.5" r="4.4"/><circle cx="94.5" cy="58.5" r="4.4"/></g><g fill="#f3fde8"><circle cx="11.5" cy="10.5" r="4.4"/><circle cx="11.5" cy="58.5" r="4.4"/><circle cx="19.7" cy="10.5" r="4.4"/><circle cx="19.7" cy="58.5" r="4.4"/><circle cx="27.9" cy="10.5" r="4.4"/><circle cx="27.9" cy="58.5" r="4.4"/><circle cx="36.1" cy="10.5" r="4.4"/><circle cx="36.1" cy="58.5" r="4.4"/><circle cx="44.3" cy="10.5" r="4.4"/><circle cx="44.3" cy="58.5" r="4.4"/><circle cx="52.5" cy="10.5" r="4.4"/><circle cx="52.5" cy="58.5" r="4.4"/><circle cx="60.7" cy="10.5" r="4.4"/><circle cx="60.7" cy="58.5" r="4.4"/><circle cx="68.9" cy="10.5" r="4.4"/><circle cx="68.9" cy="58.5" r="4.4"/><circle cx="77.1" cy="10.5" r="4.4"/><circle cx="77.1" cy="58.5" r="4.4"/><circle cx="85.3" cy="10.5" r="4.4"/><circle cx="85.3" cy="58.5" r="4.4"/><circle cx="93.5" cy="10.5" r="4.4"/><circle cx="93.5" cy="58.5" r="4.4"/><circle cx="10.5" cy="10.8" r="4.4"/><circle cx="94.5" cy="10.8" r="4.4"/><circle cx="10.5" cy="18.8" r="4.4"/><circle cx="94.5" cy="18.8" r="4.4"/><circle cx="10.5" cy="26.7" r="4.4"/><circle cx="94.5" cy="26.7" r="4.4"/><circle cx="10.5" cy="34.7" r="4.4"/><circle cx="94.5" cy="34.7" r="4.4"/><circle cx="10.5" cy="42.6" r="4.4"/><circle cx="94.5" cy="42.6" r="4.4"/><circle cx="10.5" cy="50.5" r="4.4"/><circle cx="94.5" cy="50.5" r="4.4"/><circle cx="10.5" cy="58.5" r="4.4"/><circle cx="94.5" cy="58.5" r="4.4"/><rect x="10.5" y="10.5" width="84" height="48"/></g><circle cx="65.5" cy="33.5" r="29.6" fill="#f7fff0" stroke="#6cc53a" stroke-width="1.3"/><circle cx="65.5" cy="33.5" r="26" fill="#ecfbd9"/><path d="M0 -3C-1.5 -8 -5 -14 -4.8 -19C-4.6 -24.5 4.6 -24.5 4.8 -19C5 -14 1.5 -8 0 -3z" fill="#c8f36c" stroke="#80d232" stroke-width=".9" transform="translate(65.5 33.5) rotate(8.0)"/><path d="M0 -3C-1.5 -8 -5 -14 -4.8 -19C-4.6 -24.5 4.6 -24.5 4.8 -19C5 -14 1.5 -8 0 -3z" fill="#c8f36c" stroke="#80d232" stroke-width=".9" transform="translate(65.5 33.5) rotate(35.7)"/><path d="M0 -3C-1.5 -8 -5 -14 -4.8 -19C-4.6 -24.5 4.6 -24.5 4.8 -19C5 -14 1.5 -8 0 -3z" fill="#c8f36c" stroke="#80d232" stroke-width=".9" transform="translate(65.5 33.5) rotate(63.4)"/><path d="M0 -3C-1.5 -8 -5 -14 -4.8 -19C-4.6 -24.5 4.6 -24.5 4.8 -19C5 -14 1.5 -8 0 -3z" fill="#c8f36c" stroke="#80d232" stroke-width=".9" transform="translate(65.5 33.5) rotate(91.1)"/><path d="M0 -3C-1.5 -8 -5 -14 -4.8 -19C-4.6 -24.5 4.6 -24.5 4.8 -19C5 -14 1.5 -8 0 -3z" fill="#c8f36c" stroke="#80d232" stroke-width=".9" transform="translate(65.5 33.5) rotate(118.8)"/><path d="M0 -3C-1.5 -8 -5 -14 -4.8 -19C-4.6 -24.5 4.6 -24.5 4.8 -19C5 -14 1.5 -8 0 -3z" fill="#c8f36c" stroke="#80d232" stroke-width=".9" transform="translate(65.5 33.5) rotate(146.5)"/><path d="M0 -3C-1.5 -8 -5 -14 -4.8 -19C-4.6 -24.5 4.6 -24.5 4.8 -19C5 -14 1.5 -8 0 -3z" fill="#c8f36c" stroke="#80d232" stroke-width=".9" transform="translate(65.5 33.5) rotate(174.2)"/><path d="M0 -3C-1.5 -8 -5 -14 -4.8 -19C-4.6 -24.5 4.6 -24.5 4.8 -19C5 -14 1.5 -8 0 -3z" fill="#c8f36c" stroke="#80d232" stroke-width=".9" transform="translate(65.5 33.5) rotate(201.8)"/><path d="M0 -3C-1.5 -8 -5 -14 -4.8 -19C-4.6 -24.5 4.6 -24.5 4.8 -19C5 -14 1.5 -8 0 -3z" fill="#c8f36c" stroke="#80d232" stroke-width=".9" transform="translate(65.5 33.5) rotate(229.5)"/><path d="M0 -3C-1.5 -8 -5 -14 -4.8 -19C-4.6 -24.5 4.6 -24.5 4.8 -19C5 -14 1.5 -8 0 -3z" fill="#c8f36c" stroke="#80d232" stroke-width=".9" transform="translate(65.5 33.5) rotate(257.2)"/><path d="M0 -3C-1.5 -8 -5 -14 -4.8 -19C-4.6 -24.5 4.6 -24.5 4.8 -19C5 -14 1.5 -8 0 -3z" fill="#c8f36c" stroke="#80d232" stroke-width=".9" transform="translate(65.5 33.5) rotate(284.9)"/><path d="M0 -3C-1.5 -8 -5 -14 -4.8 -19C-4.6 -24.5 4.6 -24.5 4.8 -19C5 -14 1.5 -8 0 -3z" fill="#c8f36c" stroke="#80d232" stroke-width=".9" transform="translate(65.5 33.5) rotate(312.6)"/><path d="M0 -3C-1.5 -8 -5 -14 -4.8 -19C-4.6 -24.5 4.6 -24.5 4.8 -19C5 -14 1.5 -8 0 -3z" fill="#c8f36c" stroke="#80d232" stroke-width=".9" transform="translate(65.5 33.5) rotate(340.3)"/><circle cx="65.5" cy="33.5" r="3.6" fill="#c2ee62"/><circle cx="56.7" cy="32.7" r="1.5" fill="#7a2a0a"/><circle cx="74.3" cy="33.5" r="1.5" fill="#7a2a0a"/><circle cx="50.3" cy="31.3" r="1.8" fill="none" stroke="#9c5a14" stroke-width="1"/><path d="M55.5 29.0l1.5 .8M74.5 29.5l-1.5 .8" stroke="#9c4a1a" stroke-width=".8"/><path d="M64.0 36.0l1.5-2.3 1.5 2.3" fill="none" stroke="#7a2a0a" stroke-width=".9"/><text x="14.5" y="23.8" font-family="Noto Sans CJK SC,sans-serif" font-size="13" fill="#78b65a">英</text><path d="M23.5 30a5.5 5.5 0 1 1-7 7 4.5 4.5 0 0 0 7-7z" fill="#78b65a"/><path d="M15.5 48l3.5-2a2 2 0 0 0 3 0l3.5 2 1 3-2 1v6.5h-8V52l-2-1z" fill="#78b65a"/></svg>
<span class="t" style="left:1631px;top:943px;line-height:28px;height:28px;font-size:20px;color:#b9b9b9;font-family:'Liberation Sans','Noto Sans CJK SC',sans-serif;letter-spacing:0.680px;">激活 Windows</span>
<span class="t" style="left:1631px;top:970px;line-height:22px;height:22px;font-size:14.5px;color:#bdbdbd;font-family:'Liberation Sans','Noto Sans CJK SC',sans-serif;letter-spacing:0.527px;">转到“设置”以激活 Windows。</span>
</body></html>
